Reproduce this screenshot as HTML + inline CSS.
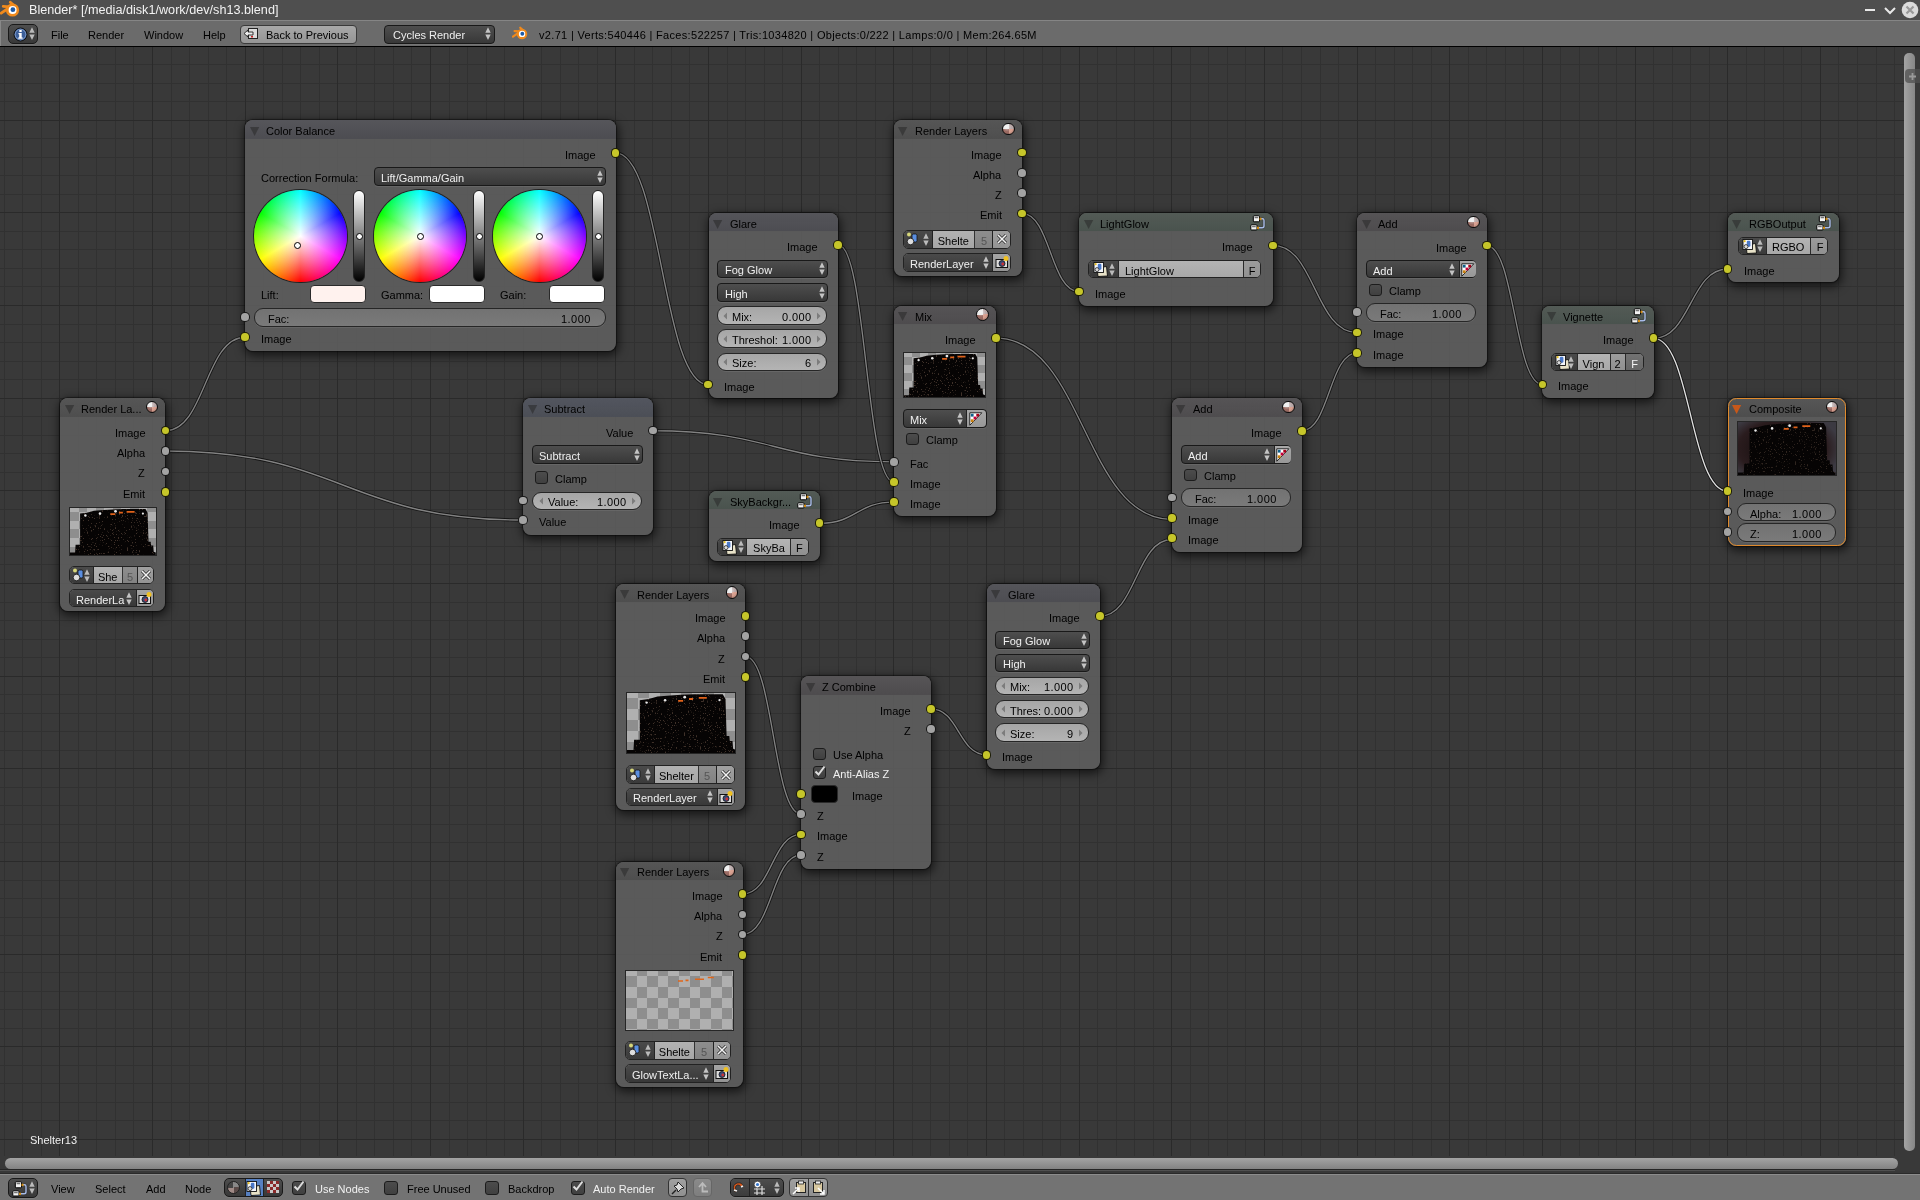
<!DOCTYPE html><html><head><meta charset="utf-8"><style>
html,body{margin:0;padding:0}
body{width:1920px;height:1200px;overflow:hidden;background:#393939;font-family:"Liberation Sans",sans-serif;position:relative}
.a{position:absolute;box-sizing:border-box}
.t{white-space:nowrap;font-family:"Liberation Sans",sans-serif;will-change:transform}
.node{border-radius:8px;background:rgba(95,95,95,0.87);box-shadow:0 0 1px 0.6px rgba(0,0,0,0.45),1px 3px 10px 2px rgba(0,0,0,0.6)}
.node.sel{}
.hdr{border-radius:8px 8px 0 0}
.sock{border-radius:50%;border:1px solid rgba(0,0,0,0.85)}
.dd{border:1px solid #191919;background:linear-gradient(#4e4e4e,#383838);box-shadow:0 1px 0 rgba(255,255,255,0.07)}
.num{border-radius:9px;border:1px solid #262626;background:linear-gradient(#a6a6a6,#b4b4b4);box-shadow:0 1px 0 rgba(255,255,255,0.07)}
.sl{border-radius:9px;border:1px solid #262626;background:linear-gradient(#727272,#7a7a7a);box-shadow:0 1px 0 rgba(255,255,255,0.07)}
.cb{border-radius:3px;border:1px solid #1c1c1c;background:linear-gradient(#4c4c4c,#404040)}
.btn{border-radius:4px;border:1px solid #2a2a2a;background:linear-gradient(#9e9e9e,#8e8e8e)}
</style></head><body><svg class="a" style="left:0;top:0" width="0" height="0"><defs><filter id="nz" x="0" y="0" width="100%" height="100%" color-interpolation-filters="sRGB"><feTurbulence type="fractalNoise" baseFrequency="0.75" numOctaves="2" seed="4" result="t"/><feColorMatrix in="t" type="matrix" values="0 0 0 0 0.32  0 0 0 0 0.25  0 0 0 0 0.21  0 0 0 12 -7.6" result="c"/><feComposite in="c" in2="SourceAlpha" operator="in"/></filter></defs></svg><div class="a " style="left:0.0px;top:0.0px;width:1920.0px;height:20.0px;background:#4f4f4f"></div><svg class="a" style="left:0px;top:0px" width="20.0" height="20.0" viewBox="0 0 20 20"><g stroke="#f08a1c" stroke-linecap="round" stroke-width="2.8" fill="none"><path d="M10.3 2.2 L13.5 5"/><path d="M3.2 6.4 L10 6.8"/><path d="M1.2 13.2 L8 8.5"/></g><circle cx="12.5" cy="10" r="6.6" fill="#f08a1c"/><circle cx="12.6" cy="9.9" r="4" fill="#fff"/><circle cx="12.9" cy="9.7" r="2.4" fill="#1d5aa6"/></svg><div class="a t" style="left:28.5px;top:2.8px;font-size:12.65px;line-height:14px;color:#f2f2f2;">Blender* [/media/disk1/work/dev/sh13.blend]</div><svg class="a" style="left:1860px;top:0" width="60" height="20"><rect x="5" y="9" width="10" height="2" fill="#e8e8e8"/><path d="M25 8 L30 13 L35 8" stroke="#e8e8e8" stroke-width="2" fill="none"/><circle cx="50" cy="10" r="8.3" fill="#dcdcdc"/><path d="M46.5 6.5 L53.5 13.5 M53.5 6.5 L46.5 13.5" stroke="#9a9a9a" stroke-width="2.2"/></svg><div class="a " style="left:0.0px;top:20.0px;width:1920.0px;height:27.0px;background:#6b6b6b;border-top:1px solid #858585;border-bottom:1px solid #000"></div><div class="a " style="left:0.0px;top:21.0px;width:1.0px;height:25.0px;background:#888"></div><div class="a dd" style="left:8.0px;top:24.0px;width:30.0px;height:20.0px;border-radius:5px;"></div><svg class="a" style="left:13px;top:27px" width="15" height="15"><circle cx="7.5" cy="7.5" r="6.5" fill="#3c5f9a" stroke="#111" stroke-width="1"/><circle cx="7.5" cy="7.5" r="5.3" fill="none" stroke="#8aa6d0" stroke-width="0.8"/><rect x="6.3" y="3" width="2.4" height="2" fill="#fff"/><path d="M5.5 6 h3.2 v4.5 h1 v1.3 h-4.5 v-1.3 h1 v-3.2 h-0.7z" fill="#fff"/></svg><svg class="a" style="left:28.5px;top:27.4px" width="6" height="14"><path d="M0.3 5.8 L3 0.2 L5.7 5.8 Z M0.3 7.4 L3 13 L5.7 7.4 Z" fill="#bbb"/></svg><div class="a t" style="left:50.5px;top:28.1px;font-size:11px;line-height:14px;color:#000;">File</div><div class="a t" style="left:88.3px;top:28.1px;font-size:11px;line-height:14px;color:#000;">Render</div><div class="a t" style="left:144.2px;top:28.1px;font-size:11px;line-height:14px;color:#000;">Window</div><div class="a t" style="left:203.3px;top:28.1px;font-size:11px;line-height:14px;color:#000;">Help</div><div class="a " style="left:239.5px;top:24.5px;width:117.5px;height:19.0px;border-radius:4px;border:1px solid #3a3a3a;background:linear-gradient(#a8a8a8,#959595)"></div><svg class="a" style="left:243px;top:27px" width="16" height="14"><rect x="5.5" y="1.5" width="9" height="10" fill="#ddd" stroke="#222"/><path d="M1 6.5 L5 3 V5 H10 V8 H5 V10 Z" fill="#eee" stroke="#222" stroke-width="0.9"/><rect x="8" y="9" width="2" height="1.5" fill="#c22"/></svg><div class="a t" style="left:265.5px;top:27.7px;font-size:11px;line-height:14px;color:#000;">Back to Previous</div><div class="a dd" style="left:384.0px;top:24.5px;width:111.0px;height:19.0px;border-radius:4px;"></div><div class="a t" style="left:392.5px;top:27.9px;font-size:11px;line-height:14px;color:#eee;">Cycles Render</div><svg class="a" style="left:484.5px;top:27.4px" width="6" height="14"><path d="M0.3 5.8 L3 0.2 L5.7 5.8 Z M0.3 7.4 L3 13 L5.7 7.4 Z" fill="#c4c4c4"/></svg><svg class="a" style="left:512px;top:26px" width="16.0" height="16.0" viewBox="0 0 20 20"><g stroke="#f08a1c" stroke-linecap="round" stroke-width="2.8" fill="none"><path d="M10.3 2.2 L13.5 5"/><path d="M3.2 6.4 L10 6.8"/><path d="M1.2 13.2 L8 8.5"/></g><circle cx="12.5" cy="10" r="6.6" fill="#f08a1c"/><circle cx="12.6" cy="9.9" r="4" fill="#fff"/><circle cx="12.9" cy="9.7" r="2.4" fill="#1d5aa6"/></svg><div class="a t" style="left:539.0px;top:28.0px;font-size:11px;line-height:14px;color:#000;letter-spacing:0.32px;">v2.71 | Verts:540446 | Faces:522257 | Tris:1034820 | Objects:0/222 | Lamps:0/0 | Mem:264.65M</div><svg class="a" style="left:0;top:47px" width="1904" height="1109" shape-rendering="crispEdges"><g fill="#313131"><rect x="4" y="0" width="1" height="1109"/><rect x="22" y="0" width="1" height="1109"/><rect x="41" y="0" width="1" height="1109"/><rect x="78" y="0" width="1" height="1109"/><rect x="96" y="0" width="1" height="1109"/><rect x="115" y="0" width="1" height="1109"/><rect x="133" y="0" width="1" height="1109"/><rect x="171" y="0" width="1" height="1109"/><rect x="189" y="0" width="1" height="1109"/><rect x="208" y="0" width="1" height="1109"/><rect x="226" y="0" width="1" height="1109"/><rect x="263" y="0" width="1" height="1109"/><rect x="282" y="0" width="1" height="1109"/><rect x="300" y="0" width="1" height="1109"/><rect x="319" y="0" width="1" height="1109"/><rect x="356" y="0" width="1" height="1109"/><rect x="374" y="0" width="1" height="1109"/><rect x="393" y="0" width="1" height="1109"/><rect x="411" y="0" width="1" height="1109"/><rect x="449" y="0" width="1" height="1109"/><rect x="467" y="0" width="1" height="1109"/><rect x="486" y="0" width="1" height="1109"/><rect x="504" y="0" width="1" height="1109"/><rect x="541" y="0" width="1" height="1109"/><rect x="560" y="0" width="1" height="1109"/><rect x="578" y="0" width="1" height="1109"/><rect x="597" y="0" width="1" height="1109"/><rect x="634" y="0" width="1" height="1109"/><rect x="652" y="0" width="1" height="1109"/><rect x="671" y="0" width="1" height="1109"/><rect x="689" y="0" width="1" height="1109"/><rect x="727" y="0" width="1" height="1109"/><rect x="745" y="0" width="1" height="1109"/><rect x="764" y="0" width="1" height="1109"/><rect x="782" y="0" width="1" height="1109"/><rect x="819" y="0" width="1" height="1109"/><rect x="838" y="0" width="1" height="1109"/><rect x="856" y="0" width="1" height="1109"/><rect x="875" y="0" width="1" height="1109"/><rect x="912" y="0" width="1" height="1109"/><rect x="930" y="0" width="1" height="1109"/><rect x="949" y="0" width="1" height="1109"/><rect x="967" y="0" width="1" height="1109"/><rect x="1004" y="0" width="1" height="1109"/><rect x="1023" y="0" width="1" height="1109"/><rect x="1042" y="0" width="1" height="1109"/><rect x="1060" y="0" width="1" height="1109"/><rect x="1097" y="0" width="1" height="1109"/><rect x="1116" y="0" width="1" height="1109"/><rect x="1134" y="0" width="1" height="1109"/><rect x="1153" y="0" width="1" height="1109"/><rect x="1190" y="0" width="1" height="1109"/><rect x="1208" y="0" width="1" height="1109"/><rect x="1227" y="0" width="1" height="1109"/><rect x="1245" y="0" width="1" height="1109"/><rect x="1282" y="0" width="1" height="1109"/><rect x="1301" y="0" width="1" height="1109"/><rect x="1320" y="0" width="1" height="1109"/><rect x="1338" y="0" width="1" height="1109"/><rect x="1375" y="0" width="1" height="1109"/><rect x="1394" y="0" width="1" height="1109"/><rect x="1412" y="0" width="1" height="1109"/><rect x="1431" y="0" width="1" height="1109"/><rect x="1468" y="0" width="1" height="1109"/><rect x="1486" y="0" width="1" height="1109"/><rect x="1505" y="0" width="1" height="1109"/><rect x="1523" y="0" width="1" height="1109"/><rect x="1560" y="0" width="1" height="1109"/><rect x="1579" y="0" width="1" height="1109"/><rect x="1598" y="0" width="1" height="1109"/><rect x="1616" y="0" width="1" height="1109"/><rect x="1653" y="0" width="1" height="1109"/><rect x="1672" y="0" width="1" height="1109"/><rect x="1690" y="0" width="1" height="1109"/><rect x="1709" y="0" width="1" height="1109"/><rect x="1746" y="0" width="1" height="1109"/><rect x="1764" y="0" width="1" height="1109"/><rect x="1783" y="0" width="1" height="1109"/><rect x="1801" y="0" width="1" height="1109"/><rect x="1838" y="0" width="1" height="1109"/><rect x="1857" y="0" width="1" height="1109"/><rect x="1876" y="0" width="1" height="1109"/><rect x="1894" y="0" width="1" height="1109"/><rect x="0" y="17" width="1904" height="1"/><rect x="0" y="36" width="1904" height="1"/><rect x="0" y="54" width="1904" height="1"/><rect x="0" y="91" width="1904" height="1"/><rect x="0" y="110" width="1904" height="1"/><rect x="0" y="128" width="1904" height="1"/><rect x="0" y="147" width="1904" height="1"/><rect x="0" y="184" width="1904" height="1"/><rect x="0" y="202" width="1904" height="1"/><rect x="0" y="221" width="1904" height="1"/><rect x="0" y="239" width="1904" height="1"/><rect x="0" y="277" width="1904" height="1"/><rect x="0" y="295" width="1904" height="1"/><rect x="0" y="314" width="1904" height="1"/><rect x="0" y="332" width="1904" height="1"/><rect x="0" y="369" width="1904" height="1"/><rect x="0" y="388" width="1904" height="1"/><rect x="0" y="406" width="1904" height="1"/><rect x="0" y="425" width="1904" height="1"/><rect x="0" y="462" width="1904" height="1"/><rect x="0" y="480" width="1904" height="1"/><rect x="0" y="499" width="1904" height="1"/><rect x="0" y="517" width="1904" height="1"/><rect x="0" y="555" width="1904" height="1"/><rect x="0" y="573" width="1904" height="1"/><rect x="0" y="592" width="1904" height="1"/><rect x="0" y="610" width="1904" height="1"/><rect x="0" y="647" width="1904" height="1"/><rect x="0" y="666" width="1904" height="1"/><rect x="0" y="684" width="1904" height="1"/><rect x="0" y="703" width="1904" height="1"/><rect x="0" y="740" width="1904" height="1"/><rect x="0" y="758" width="1904" height="1"/><rect x="0" y="777" width="1904" height="1"/><rect x="0" y="795" width="1904" height="1"/><rect x="0" y="833" width="1904" height="1"/><rect x="0" y="851" width="1904" height="1"/><rect x="0" y="870" width="1904" height="1"/><rect x="0" y="888" width="1904" height="1"/><rect x="0" y="925" width="1904" height="1"/><rect x="0" y="944" width="1904" height="1"/><rect x="0" y="962" width="1904" height="1"/><rect x="0" y="981" width="1904" height="1"/><rect x="0" y="1018" width="1904" height="1"/><rect x="0" y="1036" width="1904" height="1"/><rect x="0" y="1055" width="1904" height="1"/><rect x="0" y="1073" width="1904" height="1"/></g><g fill="#2a2a2a"><rect x="59" y="0" width="1" height="1109"/><rect x="152" y="0" width="1" height="1109"/><rect x="245" y="0" width="1" height="1109"/><rect x="337" y="0" width="1" height="1109"/><rect x="430" y="0" width="1" height="1109"/><rect x="523" y="0" width="1" height="1109"/><rect x="615" y="0" width="1" height="1109"/><rect x="708" y="0" width="1" height="1109"/><rect x="801" y="0" width="1" height="1109"/><rect x="893" y="0" width="1" height="1109"/><rect x="986" y="0" width="1" height="1109"/><rect x="1079" y="0" width="1" height="1109"/><rect x="1171" y="0" width="1" height="1109"/><rect x="1264" y="0" width="1" height="1109"/><rect x="1357" y="0" width="1" height="1109"/><rect x="1449" y="0" width="1" height="1109"/><rect x="1542" y="0" width="1" height="1109"/><rect x="1635" y="0" width="1" height="1109"/><rect x="1727" y="0" width="1" height="1109"/><rect x="1820" y="0" width="1" height="1109"/><rect x="0" y="73" width="1904" height="1"/><rect x="0" y="165" width="1904" height="1"/><rect x="0" y="258" width="1904" height="1"/><rect x="0" y="351" width="1904" height="1"/><rect x="0" y="443" width="1904" height="1"/><rect x="0" y="536" width="1904" height="1"/><rect x="0" y="629" width="1904" height="1"/><rect x="0" y="721" width="1904" height="1"/><rect x="0" y="814" width="1904" height="1"/><rect x="0" y="907" width="1904" height="1"/><rect x="0" y="999" width="1904" height="1"/><rect x="0" y="1092" width="1904" height="1"/></g></svg><svg class="a" style="left:0;top:0" width="1920" height="1200"><path d="M615.3 152.8 C661.8 152.8 661.8 384.7 708.3 384.7" stroke="#111" stroke-opacity="0.9" stroke-width="3.1" fill="none"/><path d="M615.3 152.8 C661.8 152.8 661.8 384.7 708.3 384.7" stroke="#828282" stroke-width="1.35" fill="none"/><path d="M165.4 430.7 C205.2 430.7 205.2 337.2 245.1 337.2" stroke="#111" stroke-opacity="0.9" stroke-width="3.1" fill="none"/><path d="M165.4 430.7 C205.2 430.7 205.2 337.2 245.1 337.2" stroke="#828282" stroke-width="1.35" fill="none"/><path d="M165.4 451.0 C344.2 451.0 344.2 520.0 523.0 520.0" stroke="#111" stroke-opacity="0.9" stroke-width="3.1" fill="none"/><path d="M165.4 451.0 C344.2 451.0 344.2 520.0 523.0 520.0" stroke="#828282" stroke-width="1.35" fill="none"/><path d="M652.7 430.7 C773.2 430.7 773.2 461.8 893.8 461.8" stroke="#111" stroke-opacity="0.9" stroke-width="3.1" fill="none"/><path d="M652.7 430.7 C773.2 430.7 773.2 461.8 893.8 461.8" stroke="#828282" stroke-width="1.35" fill="none"/><path d="M838.3 245.0 C866.0 245.0 866.0 482.0 893.8 482.0" stroke="#111" stroke-opacity="0.9" stroke-width="3.1" fill="none"/><path d="M838.3 245.0 C866.0 245.0 866.0 482.0 893.8 482.0" stroke="#828282" stroke-width="1.35" fill="none"/><path d="M819.6 523.3 C856.7 523.3 856.7 502.1 893.8 502.1" stroke="#111" stroke-opacity="0.9" stroke-width="3.1" fill="none"/><path d="M819.6 523.3 C856.7 523.3 856.7 502.1 893.8 502.1" stroke="#828282" stroke-width="1.35" fill="none"/><path d="M1021.8 213.4 C1050.5 213.4 1050.5 291.7 1079.2 291.7" stroke="#111" stroke-opacity="0.9" stroke-width="3.1" fill="none"/><path d="M1021.8 213.4 C1050.5 213.4 1050.5 291.7 1079.2 291.7" stroke="#828282" stroke-width="1.35" fill="none"/><path d="M1272.8 245.3 C1314.9 245.3 1314.9 332.5 1357.0 332.5" stroke="#111" stroke-opacity="0.9" stroke-width="3.1" fill="none"/><path d="M1272.8 245.3 C1314.9 245.3 1314.9 332.5 1357.0 332.5" stroke="#828282" stroke-width="1.35" fill="none"/><path d="M995.8 338.1 C1083.9 338.1 1083.9 519.5 1172.0 519.5" stroke="#111" stroke-opacity="0.9" stroke-width="3.1" fill="none"/><path d="M995.8 338.1 C1083.9 338.1 1083.9 519.5 1172.0 519.5" stroke="#828282" stroke-width="1.35" fill="none"/><path d="M1100.1 616.0 C1136.0 616.0 1136.0 539.5 1172.0 539.5" stroke="#111" stroke-opacity="0.9" stroke-width="3.1" fill="none"/><path d="M1100.1 616.0 C1136.0 616.0 1136.0 539.5 1172.0 539.5" stroke="#828282" stroke-width="1.35" fill="none"/><path d="M1301.7 430.7 C1329.3 430.7 1329.3 352.8 1357.0 352.8" stroke="#111" stroke-opacity="0.9" stroke-width="3.1" fill="none"/><path d="M1301.7 430.7 C1329.3 430.7 1329.3 352.8 1357.0 352.8" stroke="#828282" stroke-width="1.35" fill="none"/><path d="M1486.7 245.7 C1514.7 245.7 1514.7 384.5 1542.6 384.5" stroke="#111" stroke-opacity="0.9" stroke-width="3.1" fill="none"/><path d="M1486.7 245.7 C1514.7 245.7 1514.7 384.5 1542.6 384.5" stroke="#828282" stroke-width="1.35" fill="none"/><path d="M1653.6 338.3 C1690.5 338.3 1690.5 269.0 1727.4 269.0" stroke="#111" stroke-opacity="0.9" stroke-width="3.1" fill="none"/><path d="M1653.6 338.3 C1690.5 338.3 1690.5 269.0 1727.4 269.0" stroke="#828282" stroke-width="1.35" fill="none"/><path d="M1653.6 338.3 C1690.5 338.3 1690.5 491.0 1727.4 491.0" stroke="#111" stroke-opacity="0.9" stroke-width="3.1" fill="none"/><path d="M1653.6 338.3 C1690.5 338.3 1690.5 491.0 1727.4 491.0" stroke="#e0e0e0" stroke-width="1.35" fill="none"/><path d="M745.5 656.6 C773.3 656.6 773.3 814.1 801.1 814.1" stroke="#111" stroke-opacity="0.9" stroke-width="3.1" fill="none"/><path d="M745.5 656.6 C773.3 656.6 773.3 814.1 801.1 814.1" stroke="#828282" stroke-width="1.35" fill="none"/><path d="M742.6 894.0 C771.9 894.0 771.9 834.4 801.1 834.4" stroke="#111" stroke-opacity="0.9" stroke-width="3.1" fill="none"/><path d="M742.6 894.0 C771.9 894.0 771.9 834.4 801.1 834.4" stroke="#828282" stroke-width="1.35" fill="none"/><path d="M742.6 934.4 C771.9 934.4 771.9 855.0 801.1 855.0" stroke="#111" stroke-opacity="0.9" stroke-width="3.1" fill="none"/><path d="M742.6 934.4 C771.9 934.4 771.9 855.0 801.1 855.0" stroke="#828282" stroke-width="1.35" fill="none"/><path d="M931.0 708.9 C958.7 708.9 958.7 754.8 986.4 754.8" stroke="#111" stroke-opacity="0.9" stroke-width="3.1" fill="none"/><path d="M931.0 708.9 C958.7 708.9 958.7 754.8 986.4 754.8" stroke="#828282" stroke-width="1.35" fill="none"/></svg><div class="a node" style="left:245.2px;top:120.2px;width:370.5px;height:230.6px;"></div><div class="a hdr" style="left:245.2px;top:120.2px;width:370.5px;height:18.6px;background:linear-gradient(rgba(255,255,255,0.035),rgba(0,0,0,0.03)),rgba(80,80,85,0.93);"></div><svg class="a" style="left:249.8px;top:126.9px" width="10" height="10"><path d="M0 0 L9.2 0 L4.6 9Z" fill="rgba(40,40,40,0.55)"/></svg><div class="a t" style="left:266.2px;top:124.2px;font-size:11px;line-height:14px;color:#000;">Color Balance</div><div class="a t" style="right:1324.6px;top:147.7px;font-size:11px;line-height:14px;color:#000;">Image</div><div class="a sock" style="left:610.6px;top:148.0px;width:9.7px;height:9.7px;background:#c6c62a"></div><div class="a t" style="left:261.4px;top:171.4px;font-size:11px;line-height:14px;color:#000;">Correction Formula:</div><div class="a dd" style="left:373.7px;top:167.1px;width:232.3px;height:19.2px;border-radius:4px;"></div><div class="a t" style="left:381.4px;top:171.1px;font-size:11px;line-height:14px;color:#f0f0f0;">Lift/Gamma/Gain</div><svg class="a" style="left:597.1px;top:170.2px" width="6" height="14"><path d="M0.3 5.8 L3 0.2 L5.7 5.8 Z M0.3 7.4 L3 13 L5.7 7.4 Z" fill="#c4c4c4"/></svg><div class="a" style="left:254.0px;top:189.9px;width:92.6px;height:92.6px;border-radius:50%;background:radial-gradient(closest-side,#fff,rgba(255,255,255,0) 100%),conic-gradient(#0ff,#00f,#f0f,#f00,#ff0,#0f0,#0ff);box-shadow:0 0 0 1px #222"></div><div class="a" style="left:293.7px;top:241.9px;width:7px;height:7px;border-radius:50%;border:1.5px solid #000;background:#fff"></div><div class="a" style="left:373.7px;top:189.9px;width:92.6px;height:92.6px;border-radius:50%;background:radial-gradient(closest-side,#fff,rgba(255,255,255,0) 100%),conic-gradient(#0ff,#00f,#f0f,#f00,#ff0,#0f0,#0ff);box-shadow:0 0 0 1px #222"></div><div class="a" style="left:416.5px;top:232.7px;width:7px;height:7px;border-radius:50%;border:1.5px solid #000;background:#fff"></div><div class="a" style="left:493.4px;top:189.9px;width:92.6px;height:92.6px;border-radius:50%;background:radial-gradient(closest-side,#fff,rgba(255,255,255,0) 100%),conic-gradient(#0ff,#00f,#f0f,#f00,#ff0,#0f0,#0ff);box-shadow:0 0 0 1px #222"></div><div class="a" style="left:536.2px;top:232.7px;width:7px;height:7px;border-radius:50%;border:1.5px solid #000;background:#fff"></div><div class="a " style="left:353.2px;top:190.4px;width:12.3px;height:92.0px;border-radius:6.2px;background:linear-gradient(#fff,#000);border:1px solid #222"></div><div class="a" style="left:355.9px;top:232.9px;width:7px;height:7px;border-radius:50%;border:1.5px solid #000;background:#fff"></div><div class="a " style="left:472.8px;top:190.4px;width:12.3px;height:92.0px;border-radius:6.2px;background:linear-gradient(#fff,#000);border:1px solid #222"></div><div class="a" style="left:475.5px;top:232.9px;width:7px;height:7px;border-radius:50%;border:1.5px solid #000;background:#fff"></div><div class="a " style="left:592.3px;top:190.4px;width:12.2px;height:92.0px;border-radius:6.1px;background:linear-gradient(#fff,#000);border:1px solid #222"></div><div class="a" style="left:594.9px;top:232.9px;width:7px;height:7px;border-radius:50%;border:1.5px solid #000;background:#fff"></div><div class="a t" style="left:261.4px;top:288.2px;font-size:11px;line-height:14px;color:#000;">Lift:</div><div class="a t" style="left:380.5px;top:288.2px;font-size:11px;line-height:14px;color:#000;">Gamma:</div><div class="a t" style="left:500.4px;top:288.2px;font-size:11px;line-height:14px;color:#000;">Gain:</div><div class="a " style="left:310.3px;top:285.4px;width:55.3px;height:17.2px;border-radius:4px;background:#fff2ee;border:1px solid #2a2a2a"></div><div class="a " style="left:429.4px;top:285.4px;width:56.0px;height:17.2px;border-radius:4px;background:#fff;border:1px solid #2a2a2a"></div><div class="a " style="left:549.2px;top:285.4px;width:55.4px;height:17.2px;border-radius:4px;background:#fff;border:1px solid #2a2a2a"></div><div class="a sl" style="left:254.3px;top:308.0px;width:351.4px;height:18.7px;"></div><div class="a t" style="left:268.3px;top:312.0px;font-size:11px;line-height:14px;color:#000;">Fac:</div><div class="a t" style="right:1329.6px;top:312.0px;font-size:11px;line-height:14px;color:#000;letter-spacing:0.45px;">1.000</div><div class="a sock" style="left:240.2px;top:312.3px;width:9.7px;height:9.7px;background:#a3a3a3"></div><div class="a sock" style="left:240.2px;top:332.3px;width:9.7px;height:9.7px;background:#c6c62a"></div><div class="a t" style="left:260.7px;top:332.1px;font-size:11px;line-height:14px;color:#000;">Image</div><div class="a node" style="left:59.9px;top:398.2px;width:105.5px;height:213.3px;"></div><div class="a hdr" style="left:59.9px;top:398.2px;width:105.5px;height:18.6px;background:linear-gradient(rgba(255,255,255,0.035),rgba(0,0,0,0.03)),rgba(80,80,80,0.92);"></div><svg class="a" style="left:64.5px;top:404.9px" width="10" height="10"><path d="M0 0 L9.2 0 L4.6 9Z" fill="rgba(40,40,40,0.55)"/></svg><div class="a t" style="left:80.9px;top:402.1px;font-size:11px;line-height:14px;color:#000;">Render La...</div><div class="a" style="left:145.6px;top:400.9px;width:12.6px;height:12.6px;border-radius:50%;border:1px solid #0c0c0c;background:radial-gradient(circle at 35% 30%,rgba(255,255,255,0.6),rgba(255,255,255,0) 45%),radial-gradient(circle at 40% 35%,rgba(0,0,0,0) 55%,rgba(0,0,0,0.35) 100%),conic-gradient(from 0deg at 52% 50%,#b8a8a8 0deg 90deg,#d8a090 90deg 180deg,#9a6a62 180deg 270deg,#e6e6e6 270deg 360deg)"></div><div class="a t" style="right:1774.9px;top:425.6px;font-size:11px;line-height:14px;color:#000;">Image</div><div class="a sock" style="left:160.6px;top:425.8px;width:9.7px;height:9.7px;background:#c6c62a"></div><div class="a t" style="right:1774.9px;top:445.9px;font-size:11px;line-height:14px;color:#000;">Alpha</div><div class="a sock" style="left:160.6px;top:446.1px;width:9.7px;height:9.7px;background:#a3a3a3"></div><div class="a t" style="right:1774.9px;top:466.4px;font-size:11px;line-height:14px;color:#000;">Z</div><div class="a sock" style="left:160.6px;top:466.6px;width:9.7px;height:9.7px;background:#a3a3a3"></div><div class="a t" style="right:1774.9px;top:486.9px;font-size:11px;line-height:14px;color:#000;">Emit</div><div class="a sock" style="left:160.6px;top:487.1px;width:9.7px;height:9.7px;background:#c6c62a"></div><div class="a " style="left:69.0px;top:507.0px;width:87.8px;height:49.0px;background:#8e8e8e;border:1px solid #262626;overflow:hidden"></div><svg class="a" style="left:70.0px;top:508.0px" width="85.8" height="47.0"><g fill="#b0b0b0" shape-rendering="crispEdges"><rect x="8.58" y="-12.87" width="8.58" height="8.58"/><rect x="25.74" y="-12.87" width="8.58" height="8.58"/><rect x="42.90" y="-12.87" width="8.58" height="8.58"/><rect x="60.06" y="-12.87" width="8.58" height="8.58"/><rect x="77.22" y="-12.87" width="8.58" height="8.58"/><rect x="94.38" y="-12.87" width="8.58" height="8.58"/><rect x="0.00" y="-4.29" width="8.58" height="8.58"/><rect x="17.16" y="-4.29" width="8.58" height="8.58"/><rect x="34.32" y="-4.29" width="8.58" height="8.58"/><rect x="51.48" y="-4.29" width="8.58" height="8.58"/><rect x="68.64" y="-4.29" width="8.58" height="8.58"/><rect x="85.80" y="-4.29" width="8.58" height="8.58"/><rect x="8.58" y="4.29" width="8.58" height="8.58"/><rect x="25.74" y="4.29" width="8.58" height="8.58"/><rect x="42.90" y="4.29" width="8.58" height="8.58"/><rect x="60.06" y="4.29" width="8.58" height="8.58"/><rect x="77.22" y="4.29" width="8.58" height="8.58"/><rect x="94.38" y="4.29" width="8.58" height="8.58"/><rect x="0.00" y="12.87" width="8.58" height="8.58"/><rect x="17.16" y="12.87" width="8.58" height="8.58"/><rect x="34.32" y="12.87" width="8.58" height="8.58"/><rect x="51.48" y="12.87" width="8.58" height="8.58"/><rect x="68.64" y="12.87" width="8.58" height="8.58"/><rect x="85.80" y="12.87" width="8.58" height="8.58"/><rect x="8.58" y="21.45" width="8.58" height="8.58"/><rect x="25.74" y="21.45" width="8.58" height="8.58"/><rect x="42.90" y="21.45" width="8.58" height="8.58"/><rect x="60.06" y="21.45" width="8.58" height="8.58"/><rect x="77.22" y="21.45" width="8.58" height="8.58"/><rect x="94.38" y="21.45" width="8.58" height="8.58"/><rect x="0.00" y="30.03" width="8.58" height="8.58"/><rect x="17.16" y="30.03" width="8.58" height="8.58"/><rect x="34.32" y="30.03" width="8.58" height="8.58"/><rect x="51.48" y="30.03" width="8.58" height="8.58"/><rect x="68.64" y="30.03" width="8.58" height="8.58"/><rect x="85.80" y="30.03" width="8.58" height="8.58"/><rect x="8.58" y="38.61" width="8.58" height="8.58"/><rect x="25.74" y="38.61" width="8.58" height="8.58"/><rect x="42.90" y="38.61" width="8.58" height="8.58"/><rect x="60.06" y="38.61" width="8.58" height="8.58"/><rect x="77.22" y="38.61" width="8.58" height="8.58"/><rect x="94.38" y="38.61" width="8.58" height="8.58"/><rect x="0.00" y="47.19" width="8.58" height="8.58"/><rect x="17.16" y="47.19" width="8.58" height="8.58"/><rect x="34.32" y="47.19" width="8.58" height="8.58"/><rect x="51.48" y="47.19" width="8.58" height="8.58"/><rect x="68.64" y="47.19" width="8.58" height="8.58"/><rect x="85.80" y="47.19" width="8.58" height="8.58"/></g><path d="M10.1 5.6 L17.2 4.7 L24.0 2.8 L34.3 1.9 L42.9 1.4 L53.2 0.9 L75.5 0.9 L77.6 4.7 L78.5 33.8 L80.7 33.8 L81.1 37.6 L83.2 37.6 L83.7 43.7 L85.8 44.6 L85.8 47.0 L0.0 47.0 L0.0 44.6 L5.1 44.6 L5.6 36.7 L10.1 36.7Z" fill="#060404"/><path d="M10.1 5.6 L17.2 4.7 L24.0 2.8 L34.3 1.9 L42.9 1.4 L53.2 0.9 L75.5 0.9 L77.6 4.7 L78.5 33.8 L80.7 33.8 L81.1 37.6 L83.2 37.6 L83.7 43.7 L85.8 44.6 L85.8 47.0 L0.0 47.0 L0.0 44.6 L5.1 44.6 L5.6 36.7 L10.1 36.7Z" fill="#000" filter="url(#nz)" opacity="0.75"/><g stroke="#e0621a" stroke-width="1.8"><path d="M40.3 6.1 h5 M48.9 4.7 h4 M56.6 3.8 h8"/></g><g fill="#e8e8e8"><circle cx="15.4" cy="7.5" r="1.2"/><circle cx="30.0" cy="5.6" r="1.3"/><circle cx="45.5" cy="3.3" r="1.4"/><circle cx="72.9" cy="5.6" r="1.1"/></g></svg><div class="a " style="left:69.2px;top:565.8px;width:85.3px;height:18.6px;border-radius:5px;background:#8a8a8a;border:1px solid #222;overflow:hidden"><div class="a " style="left:0.0px;top:0.0px;width:22.9px;height:16.6px;background:linear-gradient(#4a4a4a,#3a3a3a)"></div><div class="a " style="left:22.9px;top:0.0px;width:29.4px;height:16.6px;background:linear-gradient(#b2b2b2,#a6a6a6);border-left:1px solid #222"></div><div class="a " style="left:52.3px;top:0.0px;width:14.7px;height:16.6px;background:linear-gradient(#8e8e8e,#828282);border-left:1px solid #333"></div><div class="a " style="left:67.0px;top:0.0px;width:17.3px;height:16.6px;background:linear-gradient(#a0a0a0,#949494);border-left:1px solid #222"></div></div><svg class="a" style="left:72.2px;top:568.1px" width="14" height="14"><circle cx="3" cy="2.5" r="2" fill="#e6e680" opacity="0.9"/><rect x="6" y="2" width="5" height="8" rx="1.5" fill="#5a8ee0" stroke="#111" stroke-width="0.8"/><circle cx="4.5" cy="9.5" r="3.3" fill="#ddd" stroke="#111" stroke-width="0.8"/></svg><svg class="a" style="left:84.1px;top:568.5px" width="6" height="14"><path d="M0.3 5.8 L3 0.2 L5.7 5.8 Z M0.3 7.4 L3 13 L5.7 7.4 Z" fill="#bbb"/></svg><div class="a t" style="left:93.1px;width:29.400000000000006px;text-align:center;top:569.5px;font-size:11px;line-height:14px;color:#000;">She</div><div class="a t" style="left:109.8px;width:40px;text-align:center;top:569.5px;font-size:11px;line-height:14px;color:#555;">5</div><svg class="a" style="left:139.8px;top:569.1px" width="12" height="12"><path d="M2 2 L10 10 M10 2 L2 10" stroke="#222" stroke-width="3"/><path d="M2 2 L10 10 M10 2 L2 10" stroke="#f4f4f4" stroke-width="1.6"/></svg><div class="a " style="left:69.2px;top:588.8px;width:85.3px;height:18.6px;border-radius:5px;background:#8a8a8a;border:1px solid #222;overflow:hidden"><div class="a " style="left:0.0px;top:0.0px;width:65.5px;height:16.6px;background:linear-gradient(#4a4a4a,#383838)"></div><div class="a " style="left:65.5px;top:0.0px;width:18.8px;height:16.6px;background:linear-gradient(#a4a4a4,#949494);border-left:1px solid #222"></div></div><div class="a t" style="left:76.2px;top:592.5px;font-size:11px;line-height:14px;color:#f0f0f0;">RenderLa</div><svg class="a" style="left:125.7px;top:591.5px" width="6" height="14"><path d="M0.3 5.8 L3 0.2 L5.7 5.8 Z M0.3 7.4 L3 13 L5.7 7.4 Z" fill="#c4c4c4"/></svg><svg class="a" style="left:138.1px;top:591.6px" width="14" height="13"><rect x="1" y="3.5" width="11.5" height="8" fill="#ddd" stroke="#111" stroke-width="1"/><circle cx="7" cy="7.5" r="3" fill="#3a4a7a" stroke="#111" stroke-width="0.8"/><circle cx="7.8" cy="8" r="1.4" fill="#c33"/><circle cx="11" cy="2.5" r="2.5" fill="#f0c020"/></svg><div class="a node" style="left:523.2px;top:398.2px;width:130.1px;height:136.5px;"></div><div class="a hdr" style="left:523.2px;top:398.2px;width:130.1px;height:18.6px;background:linear-gradient(rgba(255,255,255,0.035),rgba(0,0,0,0.03)),rgba(77,80,90,0.92);"></div><svg class="a" style="left:527.8px;top:404.9px" width="10" height="10"><path d="M0 0 L9.2 0 L4.6 9Z" fill="rgba(40,40,40,0.55)"/></svg><div class="a t" style="left:544.2px;top:402.1px;font-size:11px;line-height:14px;color:#000;">Subtract</div><div class="a t" style="right:1287.0px;top:425.6px;font-size:11px;line-height:14px;color:#000;">Value</div><div class="a sock" style="left:647.9px;top:425.8px;width:9.7px;height:9.7px;background:#a3a3a3"></div><div class="a dd" style="left:531.7px;top:444.7px;width:111.5px;height:19.3px;border-radius:4px;"></div><div class="a t" style="left:539.4px;top:448.7px;font-size:11px;line-height:14px;color:#f0f0f0;">Subtract</div><svg class="a" style="left:634.3px;top:447.9px" width="6" height="14"><path d="M0.3 5.8 L3 0.2 L5.7 5.8 Z M0.3 7.4 L3 13 L5.7 7.4 Z" fill="#c4c4c4"/></svg><div class="a cb" style="left:535.3px;top:471.3px;width:12.5px;height:12.5px;"></div><div class="a t" style="left:555.3px;top:471.7px;font-size:11px;line-height:14px;color:#000;">Clamp</div><div class="a num" style="left:532.0px;top:491.6px;width:110.4px;height:18.4px;"></div><svg class="a" style="left:538.5px;top:497.0px" width="5" height="8"><path d="M4 0.5 L0.5 4 L4 7.5Z" fill="#7c7c7c"/></svg><svg class="a" style="left:630.9px;top:497.0px" width="5" height="8"><path d="M1 0.5 L4.5 4 L1 7.5Z" fill="#7c7c7c"/></svg><div class="a t" style="left:547.5px;top:495.4px;font-size:11px;line-height:14px;color:#000;">Value:</div><div class="a t" style="right:1293.6px;top:495.4px;font-size:11px;line-height:14px;color:#000;letter-spacing:0.4px;">1.000</div><div class="a sock" style="left:518.1px;top:495.5px;width:9.7px;height:9.7px;background:#a3a3a3"></div><div class="a sock" style="left:518.1px;top:515.1px;width:9.7px;height:9.7px;background:#a3a3a3"></div><div class="a t" style="left:538.7px;top:514.9px;font-size:11px;line-height:14px;color:#000;">Value</div><div class="a node" style="left:708.5px;top:212.9px;width:129.8px;height:185.4px;"></div><div class="a hdr" style="left:708.5px;top:212.9px;width:129.8px;height:18.6px;background:linear-gradient(rgba(255,255,255,0.035),rgba(0,0,0,0.03)),rgba(80,80,85,0.93);"></div><svg class="a" style="left:713.1px;top:219.6px" width="10" height="10"><path d="M0 0 L9.2 0 L4.6 9Z" fill="rgba(40,40,40,0.55)"/></svg><div class="a t" style="left:729.5px;top:216.8px;font-size:11px;line-height:14px;color:#000;">Glare</div><div class="a t" style="right:1102.0px;top:239.9px;font-size:11px;line-height:14px;color:#000;">Image</div><div class="a sock" style="left:833.4px;top:240.2px;width:9.7px;height:9.7px;background:#c6c62a"></div><div class="a dd" style="left:716.8px;top:259.9px;width:111.2px;height:18.0px;border-radius:4px;"></div><div class="a t" style="left:724.5px;top:263.3px;font-size:11px;line-height:14px;color:#f0f0f0;">Fog Glow</div><svg class="a" style="left:819.1px;top:262.4px" width="6" height="14"><path d="M0.3 5.8 L3 0.2 L5.7 5.8 Z M0.3 7.4 L3 13 L5.7 7.4 Z" fill="#c4c4c4"/></svg><div class="a dd" style="left:716.8px;top:283.1px;width:111.2px;height:18.6px;border-radius:4px;"></div><div class="a t" style="left:724.5px;top:286.8px;font-size:11px;line-height:14px;color:#f0f0f0;">High</div><svg class="a" style="left:819.1px;top:285.9px" width="6" height="14"><path d="M0.3 5.8 L3 0.2 L5.7 5.8 Z M0.3 7.4 L3 13 L5.7 7.4 Z" fill="#c4c4c4"/></svg><div class="a num" style="left:716.8px;top:306.2px;width:110.7px;height:18.4px;"></div><svg class="a" style="left:723.3px;top:311.6px" width="5" height="8"><path d="M4 0.5 L0.5 4 L4 7.5Z" fill="#7c7c7c"/></svg><svg class="a" style="left:816.0px;top:311.6px" width="5" height="8"><path d="M1 0.5 L4.5 4 L1 7.5Z" fill="#7c7c7c"/></svg><div class="a t" style="left:732.3px;top:310.0px;font-size:11px;line-height:14px;color:#000;">Mix:</div><div class="a t" style="right:1108.5px;top:310.0px;font-size:11px;line-height:14px;color:#000;letter-spacing:0.4px;">0.000</div><div class="a num" style="left:716.8px;top:329.2px;width:110.7px;height:18.7px;"></div><svg class="a" style="left:723.3px;top:334.8px" width="5" height="8"><path d="M4 0.5 L0.5 4 L4 7.5Z" fill="#7c7c7c"/></svg><svg class="a" style="left:816.0px;top:334.8px" width="5" height="8"><path d="M1 0.5 L4.5 4 L1 7.5Z" fill="#7c7c7c"/></svg><div class="a t" style="left:732.3px;top:333.1px;font-size:11px;line-height:14px;color:#000;">Threshol:</div><div class="a t" style="right:1108.5px;top:333.1px;font-size:11px;line-height:14px;color:#000;letter-spacing:0.4px;">1.000</div><div class="a num" style="left:716.8px;top:352.5px;width:110.7px;height:18.7px;"></div><svg class="a" style="left:723.3px;top:358.1px" width="5" height="8"><path d="M4 0.5 L0.5 4 L4 7.5Z" fill="#7c7c7c"/></svg><svg class="a" style="left:816.0px;top:358.1px" width="5" height="8"><path d="M1 0.5 L4.5 4 L1 7.5Z" fill="#7c7c7c"/></svg><div class="a t" style="left:732.3px;top:356.4px;font-size:11px;line-height:14px;color:#000;">Size:</div><div class="a t" style="right:1108.5px;top:356.4px;font-size:11px;line-height:14px;color:#000;letter-spacing:0.4px;">6</div><div class="a sock" style="left:703.4px;top:379.8px;width:9.7px;height:9.7px;background:#c6c62a"></div><div class="a t" style="left:724.0px;top:379.6px;font-size:11px;line-height:14px;color:#000;">Image</div><div class="a node" style="left:893.8px;top:120.2px;width:128.1px;height:155.5px;"></div><div class="a hdr" style="left:893.8px;top:120.2px;width:128.1px;height:18.6px;background:linear-gradient(rgba(255,255,255,0.035),rgba(0,0,0,0.03)),rgba(80,80,80,0.92);"></div><svg class="a" style="left:898.4px;top:126.9px" width="10" height="10"><path d="M0 0 L9.2 0 L4.6 9Z" fill="rgba(40,40,40,0.55)"/></svg><div class="a t" style="left:914.8px;top:124.2px;font-size:11px;line-height:14px;color:#000;">Render Layers</div><div class="a" style="left:1002.1px;top:122.9px;width:12.6px;height:12.6px;border-radius:50%;border:1px solid #0c0c0c;background:radial-gradient(circle at 35% 30%,rgba(255,255,255,0.6),rgba(255,255,255,0) 45%),radial-gradient(circle at 40% 35%,rgba(0,0,0,0) 55%,rgba(0,0,0,0.35) 100%),conic-gradient(from 0deg at 52% 50%,#b8a8a8 0deg 90deg,#d8a090 90deg 180deg,#9a6a62 180deg 270deg,#e6e6e6 270deg 360deg)"></div><div class="a t" style="right:918.4px;top:147.6px;font-size:11px;line-height:14px;color:#000;">Image</div><div class="a sock" style="left:1016.9px;top:147.8px;width:9.7px;height:9.7px;background:#c6c62a"></div><div class="a t" style="right:918.4px;top:167.9px;font-size:11px;line-height:14px;color:#000;">Alpha</div><div class="a sock" style="left:1016.9px;top:168.2px;width:9.7px;height:9.7px;background:#a3a3a3"></div><div class="a t" style="right:918.4px;top:188.1px;font-size:11px;line-height:14px;color:#000;">Z</div><div class="a sock" style="left:1016.9px;top:188.3px;width:9.7px;height:9.7px;background:#a3a3a3"></div><div class="a t" style="right:918.4px;top:208.3px;font-size:11px;line-height:14px;color:#000;">Emit</div><div class="a sock" style="left:1016.9px;top:208.6px;width:9.7px;height:9.7px;background:#c6c62a"></div><div class="a " style="left:903.3px;top:230.1px;width:107.9px;height:18.6px;border-radius:5px;background:#8a8a8a;border:1px solid #222;overflow:hidden"><div class="a " style="left:0.0px;top:0.0px;width:27.5px;height:16.6px;background:linear-gradient(#4a4a4a,#3a3a3a)"></div><div class="a " style="left:27.5px;top:0.0px;width:42.7px;height:16.6px;background:linear-gradient(#b2b2b2,#a6a6a6);border-left:1px solid #222"></div><div class="a " style="left:70.2px;top:0.0px;width:18.0px;height:16.6px;background:linear-gradient(#8e8e8e,#828282);border-left:1px solid #333"></div><div class="a " style="left:88.2px;top:0.0px;width:18.7px;height:16.6px;background:linear-gradient(#a0a0a0,#949494);border-left:1px solid #222"></div></div><svg class="a" style="left:906.3px;top:232.4px" width="14" height="14"><circle cx="3" cy="2.5" r="2" fill="#e6e680" opacity="0.9"/><rect x="6" y="2" width="5" height="8" rx="1.5" fill="#5a8ee0" stroke="#111" stroke-width="0.8"/><circle cx="4.5" cy="9.5" r="3.3" fill="#ddd" stroke="#111" stroke-width="0.8"/></svg><svg class="a" style="left:922.8px;top:232.8px" width="6" height="14"><path d="M0.3 5.8 L3 0.2 L5.7 5.8 Z M0.3 7.4 L3 13 L5.7 7.4 Z" fill="#bbb"/></svg><div class="a t" style="left:931.8px;width:42.700000000000045px;text-align:center;top:233.8px;font-size:11px;line-height:14px;color:#000;">Shelte</div><div class="a t" style="left:963.5px;width:40px;text-align:center;top:233.8px;font-size:11px;line-height:14px;color:#555;">5</div><svg class="a" style="left:995.9px;top:233.4px" width="12" height="12"><path d="M2 2 L10 10 M10 2 L2 10" stroke="#222" stroke-width="3"/><path d="M2 2 L10 10 M10 2 L2 10" stroke="#f4f4f4" stroke-width="1.6"/></svg><div class="a " style="left:903.3px;top:253.0px;width:107.9px;height:18.6px;border-radius:5px;background:#8a8a8a;border:1px solid #222;overflow:hidden"><div class="a " style="left:0.0px;top:0.0px;width:88.2px;height:16.6px;background:linear-gradient(#4a4a4a,#383838)"></div><div class="a " style="left:88.2px;top:0.0px;width:18.7px;height:16.6px;background:linear-gradient(#a4a4a4,#949494);border-left:1px solid #222"></div></div><div class="a t" style="left:910.3px;top:256.7px;font-size:11px;line-height:14px;color:#f0f0f0;">RenderLayer</div><svg class="a" style="left:982.5px;top:255.7px" width="6" height="14"><path d="M0.3 5.8 L3 0.2 L5.7 5.8 Z M0.3 7.4 L3 13 L5.7 7.4 Z" fill="#c4c4c4"/></svg><svg class="a" style="left:994.9px;top:255.8px" width="14" height="13"><rect x="1" y="3.5" width="11.5" height="8" fill="#ddd" stroke="#111" stroke-width="1"/><circle cx="7" cy="7.5" r="3" fill="#3a4a7a" stroke="#111" stroke-width="0.8"/><circle cx="7.8" cy="8" r="1.4" fill="#c33"/><circle cx="11" cy="2.5" r="2.5" fill="#f0c020"/></svg><div class="a node" style="left:893.8px;top:305.5px;width:102.2px;height:210.0px;"></div><div class="a hdr" style="left:893.8px;top:305.5px;width:102.2px;height:18.6px;background:linear-gradient(rgba(255,255,255,0.035),rgba(0,0,0,0.03)),rgba(80,78,80,0.92);"></div><svg class="a" style="left:898.4px;top:312.2px" width="10" height="10"><path d="M0 0 L9.2 0 L4.6 9Z" fill="rgba(40,40,40,0.55)"/></svg><div class="a t" style="left:914.8px;top:309.5px;font-size:11px;line-height:14px;color:#000;">Mix</div><div class="a" style="left:976.2px;top:308.2px;width:12.6px;height:12.6px;border-radius:50%;border:1px solid #0c0c0c;background:radial-gradient(circle at 35% 30%,rgba(255,255,255,0.6),rgba(255,255,255,0) 45%),radial-gradient(circle at 40% 35%,rgba(0,0,0,0) 55%,rgba(0,0,0,0.35) 100%),conic-gradient(from 0deg at 52% 50%,#b8a8a8 0deg 90deg,#d8a090 90deg 180deg,#9a6a62 180deg 270deg,#e6e6e6 270deg 360deg)"></div><div class="a t" style="right:944.3px;top:333.0px;font-size:11px;line-height:14px;color:#000;">Image</div><div class="a sock" style="left:990.9px;top:333.2px;width:9.7px;height:9.7px;background:#c6c62a"></div><div class="a " style="left:903.4px;top:352.1px;width:83.0px;height:46.4px;background:#8e8e8e;border:1px solid #262626;overflow:hidden"></div><svg class="a" style="left:904.4px;top:353.1px" width="81.0" height="44.4"><g fill="#b0b0b0" shape-rendering="crispEdges"><rect x="8.10" y="-12.15" width="8.10" height="8.10"/><rect x="24.30" y="-12.15" width="8.10" height="8.10"/><rect x="40.50" y="-12.15" width="8.10" height="8.10"/><rect x="56.70" y="-12.15" width="8.10" height="8.10"/><rect x="72.90" y="-12.15" width="8.10" height="8.10"/><rect x="89.10" y="-12.15" width="8.10" height="8.10"/><rect x="0.00" y="-4.05" width="8.10" height="8.10"/><rect x="16.20" y="-4.05" width="8.10" height="8.10"/><rect x="32.40" y="-4.05" width="8.10" height="8.10"/><rect x="48.60" y="-4.05" width="8.10" height="8.10"/><rect x="64.80" y="-4.05" width="8.10" height="8.10"/><rect x="81.00" y="-4.05" width="8.10" height="8.10"/><rect x="8.10" y="4.05" width="8.10" height="8.10"/><rect x="24.30" y="4.05" width="8.10" height="8.10"/><rect x="40.50" y="4.05" width="8.10" height="8.10"/><rect x="56.70" y="4.05" width="8.10" height="8.10"/><rect x="72.90" y="4.05" width="8.10" height="8.10"/><rect x="89.10" y="4.05" width="8.10" height="8.10"/><rect x="0.00" y="12.15" width="8.10" height="8.10"/><rect x="16.20" y="12.15" width="8.10" height="8.10"/><rect x="32.40" y="12.15" width="8.10" height="8.10"/><rect x="48.60" y="12.15" width="8.10" height="8.10"/><rect x="64.80" y="12.15" width="8.10" height="8.10"/><rect x="81.00" y="12.15" width="8.10" height="8.10"/><rect x="8.10" y="20.25" width="8.10" height="8.10"/><rect x="24.30" y="20.25" width="8.10" height="8.10"/><rect x="40.50" y="20.25" width="8.10" height="8.10"/><rect x="56.70" y="20.25" width="8.10" height="8.10"/><rect x="72.90" y="20.25" width="8.10" height="8.10"/><rect x="89.10" y="20.25" width="8.10" height="8.10"/><rect x="0.00" y="28.35" width="8.10" height="8.10"/><rect x="16.20" y="28.35" width="8.10" height="8.10"/><rect x="32.40" y="28.35" width="8.10" height="8.10"/><rect x="48.60" y="28.35" width="8.10" height="8.10"/><rect x="64.80" y="28.35" width="8.10" height="8.10"/><rect x="81.00" y="28.35" width="8.10" height="8.10"/><rect x="8.10" y="36.45" width="8.10" height="8.10"/><rect x="24.30" y="36.45" width="8.10" height="8.10"/><rect x="40.50" y="36.45" width="8.10" height="8.10"/><rect x="56.70" y="36.45" width="8.10" height="8.10"/><rect x="72.90" y="36.45" width="8.10" height="8.10"/><rect x="89.10" y="36.45" width="8.10" height="8.10"/><rect x="0.00" y="44.55" width="8.10" height="8.10"/><rect x="16.20" y="44.55" width="8.10" height="8.10"/><rect x="32.40" y="44.55" width="8.10" height="8.10"/><rect x="48.60" y="44.55" width="8.10" height="8.10"/><rect x="64.80" y="44.55" width="8.10" height="8.10"/><rect x="81.00" y="44.55" width="8.10" height="8.10"/></g><path d="M9.6 5.3 L16.2 4.4 L22.7 2.7 L32.4 1.8 L40.5 1.3 L50.2 0.9 L71.3 0.9 L73.3 4.4 L74.1 32.0 L76.1 32.0 L76.5 35.5 L78.6 35.5 L79.0 41.3 L81.0 42.2 L81.0 44.4 L0.0 44.4 L0.0 42.2 L4.9 42.2 L5.3 34.6 L9.6 34.6Z" fill="#060404"/><path d="M9.6 5.3 L16.2 4.4 L22.7 2.7 L32.4 1.8 L40.5 1.3 L50.2 0.9 L71.3 0.9 L73.3 4.4 L74.1 32.0 L76.1 32.0 L76.5 35.5 L78.6 35.5 L79.0 41.3 L81.0 42.2 L81.0 44.4 L0.0 44.4 L0.0 42.2 L4.9 42.2 L5.3 34.6 L9.6 34.6Z" fill="#000" filter="url(#nz)" opacity="0.75"/><g stroke="#e0621a" stroke-width="1.8"><path d="M38.1 5.8 h5 M46.2 4.4 h4 M53.5 3.6 h8"/></g><g fill="#e8e8e8"><circle cx="14.6" cy="7.1" r="1.2"/><circle cx="28.3" cy="5.3" r="1.3"/><circle cx="42.9" cy="3.1" r="1.4"/><circle cx="68.8" cy="5.3" r="1.1"/></g></svg><div class="a dd" style="left:902.7px;top:409.1px;width:84.2px;height:18.6px;border-radius:4px;"></div><div class="a t" style="left:910.4px;top:412.8px;font-size:11px;line-height:14px;color:#f0f0f0;">Mix</div><div class="a " style="left:966.3px;top:410.2px;width:19.6px;height:16.6px;background:linear-gradient(#a8a8a8,#989898);border-left:1px solid #222;border-radius:0 4px 4px 0"></div><svg class="a" style="left:956.5px;top:411.9px" width="6" height="14"><path d="M0.3 5.8 L3 0.2 L5.7 5.8 Z M0.3 7.4 L3 13 L5.7 7.4 Z" fill="#c4c4c4"/></svg><svg class="a" style="left:968.5px;top:412.0px" width="14" height="15"><path d="M0.8 0.8 H12.8 L0.8 13.2Z" fill="#fff" stroke="#222" stroke-width="1" stroke-linejoin="round"/><rect x="1.8" y="1.8" width="2.8" height="2.8" fill="#10608a"/><rect x="7.3" y="1.8" width="2.8" height="2.8" fill="#a8001a"/><rect x="4.6" y="4.6" width="2.8" height="2.8" fill="#c8003a"/><rect x="1.8" y="7.3" width="2.8" height="2.8" fill="#c88010"/></svg><div class="a cb" style="left:906.3px;top:432.5px;width:12.5px;height:12.5px;"></div><div class="a t" style="left:926.3px;top:432.9px;font-size:11px;line-height:14px;color:#000;">Clamp</div><div class="a sock" style="left:888.9px;top:456.9px;width:9.7px;height:9.7px;background:#a3a3a3"></div><div class="a t" style="left:909.5px;top:456.7px;font-size:11px;line-height:14px;color:#000;">Fac</div><div class="a sock" style="left:888.9px;top:477.1px;width:9.7px;height:9.7px;background:#c6c62a"></div><div class="a t" style="left:909.5px;top:476.9px;font-size:11px;line-height:14px;color:#000;">Image</div><div class="a sock" style="left:888.9px;top:497.2px;width:9.7px;height:9.7px;background:#c6c62a"></div><div class="a t" style="left:909.5px;top:497.0px;font-size:11px;line-height:14px;color:#000;">Image</div><div class="a node" style="left:708.5px;top:490.8px;width:111.1px;height:70.2px;"></div><div class="a hdr" style="left:708.5px;top:490.8px;width:111.1px;height:18.6px;background:linear-gradient(rgba(255,255,255,0.035),rgba(0,0,0,0.03)),rgba(76,86,80,0.92);"></div><svg class="a" style="left:713.1px;top:497.5px" width="10" height="10"><path d="M0 0 L9.2 0 L4.6 9Z" fill="rgba(40,40,40,0.55)"/></svg><div class="a t" style="left:729.5px;top:494.8px;font-size:11px;line-height:14px;color:#000;">SkyBackgr...</div><svg class="a" style="left:796.6px;top:493.1px" width="16" height="16"><path d="M10 3.8 H12.5 Q14 3.8 14 5.5 V11 Q14 12.8 12 12.8 H8" stroke="#222" stroke-width="2.6" fill="none" opacity="0.5"/><path d="M10 3.8 H12.5 Q14 3.8 14 5.5 V11 Q14 12.8 12 12.8 H8" stroke="#a8bce8" stroke-width="1.4" fill="none"/><rect x="3.3" y="0.8" width="6.2" height="6" rx="0.8" fill="#f2f2f2" stroke="#000" stroke-width="1"/><rect x="0.8" y="9.8" width="6.2" height="5.2" rx="0.8" fill="#f2f2f2" stroke="#000" stroke-width="1"/><rect x="4.6" y="2.2" width="3.6" height="1" fill="#555"/><rect x="2.1" y="11.2" width="3.6" height="1" fill="#555"/><rect x="9.5" y="2.7" width="2" height="2.4" fill="#d08a10"/><rect x="7" y="11.7" width="2" height="2.4" fill="#d08a10"/></svg><div class="a t" style="right:1120.7px;top:518.2px;font-size:11px;line-height:14px;color:#000;">Image</div><div class="a sock" style="left:814.8px;top:518.4px;width:9.7px;height:9.7px;background:#c6c62a"></div><div class="a " style="left:717.4px;top:537.6px;width:91.7px;height:18.4px;border-radius:5px;background:#8a8a8a;border:1px solid #222;overflow:hidden"><div class="a " style="left:0.0px;top:0.0px;width:28.1px;height:16.4px;background:linear-gradient(#4a4a4a,#3a3a3a)"></div><div class="a " style="left:28.1px;top:0.0px;width:43.9px;height:16.4px;background:linear-gradient(#b4b4b4,#a8a8a8);border-left:1px solid #2a2a2a"></div><div class="a " style="left:72.0px;top:0.0px;width:18.7px;height:16.4px;background:linear-gradient(#9c9c9c,#909090);border-left:1px solid #2a2a2a"></div></div><svg class="a" style="left:721.6px;top:539.8px" width="16" height="15"><path d="M4 6 L13.5 4.5 L14.5 14 L5 14.5Z" fill="#e8e2c8" stroke="#111" stroke-width="0.9"/><rect x="1" y="0.5" width="9.5" height="10" fill="#f4f6fa" stroke="#111" stroke-width="0.9"/><circle cx="2.6" cy="2.2" r="1.1" fill="#e8c020"/><rect x="4.8" y="1.8" width="3.6" height="6" rx="1.2" fill="#4a78c8"/><circle cx="4" cy="7.6" r="2" fill="#ddd" stroke="#222" stroke-width="0.8"/></svg><svg class="a" style="left:737.5px;top:540.2px" width="6" height="14"><path d="M0.3 5.8 L3 0.2 L5.7 5.8 Z M0.3 7.4 L3 13 L5.7 7.4 Z" fill="#bbb"/></svg><div class="a t" style="left:746.5px;width:43.89999999999998px;text-align:center;top:541.2px;font-size:11px;line-height:14px;color:#000;">SkyBa</div><div class="a t" style="left:790.4px;width:18.700000000000045px;text-align:center;top:541.2px;font-size:11px;line-height:14px;color:#000;">F</div><div class="a node" style="left:1079.1px;top:212.9px;width:193.7px;height:92.9px;"></div><div class="a hdr" style="left:1079.1px;top:212.9px;width:193.7px;height:18.6px;background:linear-gradient(rgba(255,255,255,0.035),rgba(0,0,0,0.03)),rgba(76,86,80,0.92);"></div><svg class="a" style="left:1083.7px;top:219.6px" width="10" height="10"><path d="M0 0 L9.2 0 L4.6 9Z" fill="rgba(40,40,40,0.55)"/></svg><div class="a t" style="left:1100.1px;top:216.8px;font-size:11px;line-height:14px;color:#000;">LightGlow</div><svg class="a" style="left:1249.8px;top:215.2px" width="16" height="16"><path d="M10 3.8 H12.5 Q14 3.8 14 5.5 V11 Q14 12.8 12 12.8 H8" stroke="#222" stroke-width="2.6" fill="none" opacity="0.5"/><path d="M10 3.8 H12.5 Q14 3.8 14 5.5 V11 Q14 12.8 12 12.8 H8" stroke="#a8bce8" stroke-width="1.4" fill="none"/><rect x="3.3" y="0.8" width="6.2" height="6" rx="0.8" fill="#f2f2f2" stroke="#000" stroke-width="1"/><rect x="0.8" y="9.8" width="6.2" height="5.2" rx="0.8" fill="#f2f2f2" stroke="#000" stroke-width="1"/><rect x="4.6" y="2.2" width="3.6" height="1" fill="#555"/><rect x="2.1" y="11.2" width="3.6" height="1" fill="#555"/><rect x="9.5" y="2.7" width="2" height="2.4" fill="#d08a10"/><rect x="7" y="11.7" width="2" height="2.4" fill="#d08a10"/></svg><div class="a t" style="right:667.5px;top:240.2px;font-size:11px;line-height:14px;color:#000;">Image</div><div class="a sock" style="left:1268.0px;top:240.5px;width:9.7px;height:9.7px;background:#c6c62a"></div><div class="a " style="left:1088.3px;top:259.9px;width:172.8px;height:18.4px;border-radius:5px;background:#8a8a8a;border:1px solid #222;overflow:hidden"><div class="a " style="left:0.0px;top:0.0px;width:28.7px;height:16.4px;background:linear-gradient(#4a4a4a,#3a3a3a)"></div><div class="a " style="left:28.7px;top:0.0px;width:125.0px;height:16.4px;background:linear-gradient(#b4b4b4,#a8a8a8);border-left:1px solid #2a2a2a"></div><div class="a " style="left:153.7px;top:0.0px;width:18.1px;height:16.4px;background:linear-gradient(#9c9c9c,#909090);border-left:1px solid #2a2a2a"></div></div><svg class="a" style="left:1092.5px;top:262.1px" width="16" height="15"><path d="M4 6 L13.5 4.5 L14.5 14 L5 14.5Z" fill="#e8e2c8" stroke="#111" stroke-width="0.9"/><rect x="1" y="0.5" width="9.5" height="10" fill="#f4f6fa" stroke="#111" stroke-width="0.9"/><circle cx="2.6" cy="2.2" r="1.1" fill="#e8c020"/><rect x="4.8" y="1.8" width="3.6" height="6" rx="1.2" fill="#4a78c8"/><circle cx="4" cy="7.6" r="2" fill="#ddd" stroke="#222" stroke-width="0.8"/></svg><svg class="a" style="left:1109.0px;top:262.5px" width="6" height="14"><path d="M0.3 5.8 L3 0.2 L5.7 5.8 Z M0.3 7.4 L3 13 L5.7 7.4 Z" fill="#bbb"/></svg><div class="a t" style="left:1125.0px;top:263.5px;font-size:11px;line-height:14px;color:#000;">LightGlow</div><div class="a t" style="left:1243.0px;width:18.09999999999991px;text-align:center;top:263.5px;font-size:11px;line-height:14px;color:#000;">F</div><div class="a sock" style="left:1074.4px;top:286.8px;width:9.7px;height:9.7px;background:#c6c62a"></div><div class="a t" style="left:1094.9px;top:286.6px;font-size:11px;line-height:14px;color:#000;">Image</div><div class="a node" style="left:1357.1px;top:212.9px;width:130.0px;height:154.1px;"></div><div class="a hdr" style="left:1357.1px;top:212.9px;width:130.0px;height:18.6px;background:linear-gradient(rgba(255,255,255,0.035),rgba(0,0,0,0.03)),rgba(80,78,80,0.92);"></div><svg class="a" style="left:1361.7px;top:219.6px" width="10" height="10"><path d="M0 0 L9.2 0 L4.6 9Z" fill="rgba(40,40,40,0.55)"/></svg><div class="a t" style="left:1378.1px;top:216.8px;font-size:11px;line-height:14px;color:#000;">Add</div><div class="a" style="left:1467.3px;top:215.6px;width:12.6px;height:12.6px;border-radius:50%;border:1px solid #0c0c0c;background:radial-gradient(circle at 35% 30%,rgba(255,255,255,0.6),rgba(255,255,255,0) 45%),radial-gradient(circle at 40% 35%,rgba(0,0,0,0) 55%,rgba(0,0,0,0.35) 100%),conic-gradient(from 0deg at 52% 50%,#b8a8a8 0deg 90deg,#d8a090 90deg 180deg,#9a6a62 180deg 270deg,#e6e6e6 270deg 360deg)"></div><div class="a t" style="right:453.2px;top:240.6px;font-size:11px;line-height:14px;color:#000;">Image</div><div class="a sock" style="left:1481.9px;top:240.8px;width:9.7px;height:9.7px;background:#c6c62a"></div><div class="a dd" style="left:1365.6px;top:260.1px;width:110.9px;height:18.3px;border-radius:4px;"></div><div class="a t" style="left:1373.3px;top:263.6px;font-size:11px;line-height:14px;color:#f0f0f0;">Add</div><div class="a " style="left:1459.0px;top:261.2px;width:16.5px;height:16.3px;background:linear-gradient(#a8a8a8,#989898);border-left:1px solid #222;border-radius:0 4px 4px 0"></div><svg class="a" style="left:1449.0px;top:262.7px" width="6" height="14"><path d="M0.3 5.8 L3 0.2 L5.7 5.8 Z M0.3 7.4 L3 13 L5.7 7.4 Z" fill="#c4c4c4"/></svg><svg class="a" style="left:1461.0px;top:262.5px" width="14" height="15"><path d="M0.8 0.8 H12.8 L0.8 13.2Z" fill="#fff" stroke="#222" stroke-width="1" stroke-linejoin="round"/><rect x="1.8" y="1.8" width="2.8" height="2.8" fill="#10608a"/><rect x="7.3" y="1.8" width="2.8" height="2.8" fill="#a8001a"/><rect x="4.6" y="4.6" width="2.8" height="2.8" fill="#c8003a"/><rect x="1.8" y="7.3" width="2.8" height="2.8" fill="#c88010"/></svg><div class="a cb" style="left:1369.4px;top:283.6px;width:12.5px;height:12.5px;"></div><div class="a t" style="left:1389.4px;top:284.0px;font-size:11px;line-height:14px;color:#000;">Clamp</div><div class="a sl" style="left:1366.3px;top:302.9px;width:110.2px;height:19.3px;"></div><div class="a t" style="left:1380.3px;top:307.2px;font-size:11px;line-height:14px;color:#000;">Fac:</div><div class="a t" style="right:458.5px;top:307.2px;font-size:11px;line-height:14px;color:#000;letter-spacing:0.45px;">1.000</div><div class="a sock" style="left:1352.2px;top:307.4px;width:9.7px;height:9.7px;background:#a3a3a3"></div><div class="a sock" style="left:1352.2px;top:327.6px;width:9.7px;height:9.7px;background:#c6c62a"></div><div class="a t" style="left:1372.7px;top:327.4px;font-size:11px;line-height:14px;color:#000;">Image</div><div class="a sock" style="left:1352.2px;top:347.9px;width:9.7px;height:9.7px;background:#c6c62a"></div><div class="a t" style="left:1372.7px;top:347.7px;font-size:11px;line-height:14px;color:#000;">Image</div><div class="a node" style="left:1171.8px;top:398.2px;width:130.3px;height:154.0px;"></div><div class="a hdr" style="left:1171.8px;top:398.2px;width:130.3px;height:18.6px;background:linear-gradient(rgba(255,255,255,0.035),rgba(0,0,0,0.03)),rgba(80,78,80,0.92);"></div><svg class="a" style="left:1176.4px;top:404.9px" width="10" height="10"><path d="M0 0 L9.2 0 L4.6 9Z" fill="rgba(40,40,40,0.55)"/></svg><div class="a t" style="left:1192.8px;top:402.1px;font-size:11px;line-height:14px;color:#000;">Add</div><div class="a" style="left:1282.3px;top:400.9px;width:12.6px;height:12.6px;border-radius:50%;border:1px solid #0c0c0c;background:radial-gradient(circle at 35% 30%,rgba(255,255,255,0.6),rgba(255,255,255,0) 45%),radial-gradient(circle at 40% 35%,rgba(0,0,0,0) 55%,rgba(0,0,0,0.35) 100%),conic-gradient(from 0deg at 52% 50%,#b8a8a8 0deg 90deg,#d8a090 90deg 180deg,#9a6a62 180deg 270deg,#e6e6e6 270deg 360deg)"></div><div class="a t" style="right:638.2px;top:425.8px;font-size:11px;line-height:14px;color:#000;">Image</div><div class="a sock" style="left:1296.9px;top:426.0px;width:9.7px;height:9.7px;background:#c6c62a"></div><div class="a dd" style="left:1180.6px;top:445.3px;width:110.9px;height:18.3px;border-radius:4px;"></div><div class="a t" style="left:1188.3px;top:448.8px;font-size:11px;line-height:14px;color:#f0f0f0;">Add</div><div class="a " style="left:1274.0px;top:446.4px;width:16.5px;height:16.3px;background:linear-gradient(#a8a8a8,#989898);border-left:1px solid #222;border-radius:0 4px 4px 0"></div><svg class="a" style="left:1264.0px;top:447.9px" width="6" height="14"><path d="M0.3 5.8 L3 0.2 L5.7 5.8 Z M0.3 7.4 L3 13 L5.7 7.4 Z" fill="#c4c4c4"/></svg><svg class="a" style="left:1276.0px;top:447.7px" width="14" height="15"><path d="M0.8 0.8 H12.8 L0.8 13.2Z" fill="#fff" stroke="#222" stroke-width="1" stroke-linejoin="round"/><rect x="1.8" y="1.8" width="2.8" height="2.8" fill="#10608a"/><rect x="7.3" y="1.8" width="2.8" height="2.8" fill="#a8001a"/><rect x="4.6" y="4.6" width="2.8" height="2.8" fill="#c8003a"/><rect x="1.8" y="7.3" width="2.8" height="2.8" fill="#c88010"/></svg><div class="a cb" style="left:1184.4px;top:468.8px;width:12.5px;height:12.5px;"></div><div class="a t" style="left:1204.4px;top:469.2px;font-size:11px;line-height:14px;color:#000;">Clamp</div><div class="a sl" style="left:1181.3px;top:488.1px;width:110.2px;height:19.3px;"></div><div class="a t" style="left:1195.3px;top:492.4px;font-size:11px;line-height:14px;color:#000;">Fac:</div><div class="a t" style="right:643.5px;top:492.4px;font-size:11px;line-height:14px;color:#000;letter-spacing:0.45px;">1.000</div><div class="a sock" style="left:1167.2px;top:492.6px;width:9.7px;height:9.7px;background:#a3a3a3"></div><div class="a sock" style="left:1167.2px;top:512.9px;width:9.7px;height:9.7px;background:#c6c62a"></div><div class="a t" style="left:1187.7px;top:512.6px;font-size:11px;line-height:14px;color:#000;">Image</div><div class="a sock" style="left:1167.2px;top:533.1px;width:9.7px;height:9.7px;background:#c6c62a"></div><div class="a t" style="left:1187.7px;top:532.9px;font-size:11px;line-height:14px;color:#000;">Image</div><div class="a node" style="left:1542.4px;top:305.5px;width:111.2px;height:92.5px;"></div><div class="a hdr" style="left:1542.4px;top:305.5px;width:111.2px;height:18.6px;background:linear-gradient(rgba(255,255,255,0.035),rgba(0,0,0,0.03)),rgba(76,86,80,0.92);"></div><svg class="a" style="left:1547.0px;top:312.2px" width="10" height="10"><path d="M0 0 L9.2 0 L4.6 9Z" fill="rgba(40,40,40,0.55)"/></svg><div class="a t" style="left:1563.4px;top:309.5px;font-size:11px;line-height:14px;color:#000;">Vignette</div><svg class="a" style="left:1630.6px;top:307.8px" width="16" height="16"><path d="M10 3.8 H12.5 Q14 3.8 14 5.5 V11 Q14 12.8 12 12.8 H8" stroke="#222" stroke-width="2.6" fill="none" opacity="0.5"/><path d="M10 3.8 H12.5 Q14 3.8 14 5.5 V11 Q14 12.8 12 12.8 H8" stroke="#a8bce8" stroke-width="1.4" fill="none"/><rect x="3.3" y="0.8" width="6.2" height="6" rx="0.8" fill="#f2f2f2" stroke="#000" stroke-width="1"/><rect x="0.8" y="9.8" width="6.2" height="5.2" rx="0.8" fill="#f2f2f2" stroke="#000" stroke-width="1"/><rect x="4.6" y="2.2" width="3.6" height="1" fill="#555"/><rect x="2.1" y="11.2" width="3.6" height="1" fill="#555"/><rect x="9.5" y="2.7" width="2" height="2.4" fill="#d08a10"/><rect x="7" y="11.7" width="2" height="2.4" fill="#d08a10"/></svg><div class="a t" style="right:286.7px;top:333.2px;font-size:11px;line-height:14px;color:#000;">Image</div><div class="a sock" style="left:1648.8px;top:333.4px;width:9.7px;height:9.7px;background:#c6c62a"></div><div class="a " style="left:1551.0px;top:352.9px;width:92.6px;height:18.4px;border-radius:5px;background:#8a8a8a;border:1px solid #222;overflow:hidden"><div class="a " style="left:0.0px;top:0.0px;width:24.5px;height:16.4px;background:linear-gradient(#4a4a4a,#3a3a3a)"></div><div class="a " style="left:24.5px;top:0.0px;width:33.0px;height:16.4px;background:linear-gradient(#b4b4b4,#a8a8a8);border-left:1px solid #2a2a2a"></div><div class="a " style="left:57.5px;top:0.0px;width:15.0px;height:16.4px;background:linear-gradient(#9c9c9c,#909090);border-left:1px solid #2a2a2a"></div><div class="a " style="left:72.5px;top:0.0px;width:19.1px;height:16.4px;background:linear-gradient(#727272,#666);border-left:1px solid #2a2a2a"></div></div><svg class="a" style="left:1555.2px;top:355.1px" width="16" height="15"><path d="M4 6 L13.5 4.5 L14.5 14 L5 14.5Z" fill="#e8e2c8" stroke="#111" stroke-width="0.9"/><rect x="1" y="0.5" width="9.5" height="10" fill="#f4f6fa" stroke="#111" stroke-width="0.9"/><circle cx="2.6" cy="2.2" r="1.1" fill="#e8c020"/><rect x="4.8" y="1.8" width="3.6" height="6" rx="1.2" fill="#4a78c8"/><circle cx="4" cy="7.6" r="2" fill="#ddd" stroke="#222" stroke-width="0.8"/></svg><svg class="a" style="left:1567.5px;top:355.5px" width="6" height="14"><path d="M0.3 5.8 L3 0.2 L5.7 5.8 Z M0.3 7.4 L3 13 L5.7 7.4 Z" fill="#bbb"/></svg><div class="a t" style="left:1576.5px;width:33.0px;text-align:center;top:356.5px;font-size:11px;line-height:14px;color:#000;">Vign</div><div class="a t" style="left:1609.5px;width:15.0px;text-align:center;top:356.5px;font-size:11px;line-height:14px;color:#000;">2</div><div class="a t" style="left:1624.5px;width:19.09999999999991px;text-align:center;top:356.5px;font-size:11px;line-height:14px;color:#f4f4f4;">F</div><div class="a sock" style="left:1537.8px;top:379.6px;width:9.7px;height:9.7px;background:#c6c62a"></div><div class="a t" style="left:1558.3px;top:379.4px;font-size:11px;line-height:14px;color:#000;">Image</div><div class="a node" style="left:1727.8px;top:212.9px;width:111.2px;height:69.6px;"></div><div class="a hdr" style="left:1727.8px;top:212.9px;width:111.2px;height:18.6px;background:linear-gradient(rgba(255,255,255,0.035),rgba(0,0,0,0.03)),rgba(76,86,80,0.92);"></div><svg class="a" style="left:1732.4px;top:219.6px" width="10" height="10"><path d="M0 0 L9.2 0 L4.6 9Z" fill="rgba(40,40,40,0.55)"/></svg><div class="a t" style="left:1748.8px;top:216.8px;font-size:11px;line-height:14px;color:#000;">RGBOutput</div><svg class="a" style="left:1816.0px;top:215.2px" width="16" height="16"><path d="M10 3.8 H12.5 Q14 3.8 14 5.5 V11 Q14 12.8 12 12.8 H8" stroke="#222" stroke-width="2.6" fill="none" opacity="0.5"/><path d="M10 3.8 H12.5 Q14 3.8 14 5.5 V11 Q14 12.8 12 12.8 H8" stroke="#a8bce8" stroke-width="1.4" fill="none"/><rect x="3.3" y="0.8" width="6.2" height="6" rx="0.8" fill="#f2f2f2" stroke="#000" stroke-width="1"/><rect x="0.8" y="9.8" width="6.2" height="5.2" rx="0.8" fill="#f2f2f2" stroke="#000" stroke-width="1"/><rect x="4.6" y="2.2" width="3.6" height="1" fill="#555"/><rect x="2.1" y="11.2" width="3.6" height="1" fill="#555"/><rect x="9.5" y="2.7" width="2" height="2.4" fill="#d08a10"/><rect x="7" y="11.7" width="2" height="2.4" fill="#d08a10"/></svg><div class="a " style="left:1737.6px;top:236.8px;width:90.9px;height:18.4px;border-radius:5px;background:#8a8a8a;border:1px solid #222;overflow:hidden"><div class="a " style="left:0.0px;top:0.0px;width:27.5px;height:16.4px;background:linear-gradient(#4a4a4a,#3a3a3a)"></div><div class="a " style="left:27.5px;top:0.0px;width:44.4px;height:16.4px;background:linear-gradient(#b4b4b4,#a8a8a8);border-left:1px solid #2a2a2a"></div><div class="a " style="left:71.9px;top:0.0px;width:18.0px;height:16.4px;background:linear-gradient(#9c9c9c,#909090);border-left:1px solid #2a2a2a"></div></div><svg class="a" style="left:1741.8px;top:239.0px" width="16" height="15"><path d="M4 6 L13.5 4.5 L14.5 14 L5 14.5Z" fill="#e8e2c8" stroke="#111" stroke-width="0.9"/><rect x="1" y="0.5" width="9.5" height="10" fill="#f4f6fa" stroke="#111" stroke-width="0.9"/><circle cx="2.6" cy="2.2" r="1.1" fill="#e8c020"/><rect x="4.8" y="1.8" width="3.6" height="6" rx="1.2" fill="#4a78c8"/><circle cx="4" cy="7.6" r="2" fill="#ddd" stroke="#222" stroke-width="0.8"/></svg><svg class="a" style="left:1757.1px;top:239.4px" width="6" height="14"><path d="M0.3 5.8 L3 0.2 L5.7 5.8 Z M0.3 7.4 L3 13 L5.7 7.4 Z" fill="#bbb"/></svg><div class="a t" style="left:1766.1px;width:44.40000000000009px;text-align:center;top:240.4px;font-size:11px;line-height:14px;color:#000;">RGBO</div><div class="a t" style="left:1810.5px;width:18.0px;text-align:center;top:240.4px;font-size:11px;line-height:14px;color:#000;">F</div><div class="a sock" style="left:1722.8px;top:264.1px;width:9.7px;height:9.7px;background:#c6c62a"></div><div class="a t" style="left:1743.7px;top:263.9px;font-size:11px;line-height:14px;color:#000;">Image</div><div class="a node sel" style="left:1727.8px;top:398.2px;width:117.8px;height:147.4px;"></div><div class="a hdr" style="left:1727.8px;top:398.2px;width:117.8px;height:18.6px;background:linear-gradient(rgba(255,255,255,0.035),rgba(0,0,0,0.03)),rgba(80,80,80,0.92);"></div><svg class="a" style="left:1732.4px;top:404.9px" width="10" height="10"><path d="M0 0 L9.2 0 L4.6 9Z" fill="#c8581a"/></svg><div class="a t" style="left:1748.8px;top:402.1px;font-size:11px;line-height:14px;color:#000;">Composite</div><div class="a" style="left:1825.8px;top:400.9px;width:12.6px;height:12.6px;border-radius:50%;border:1px solid #0c0c0c;background:radial-gradient(circle at 35% 30%,rgba(255,255,255,0.6),rgba(255,255,255,0) 45%),radial-gradient(circle at 40% 35%,rgba(0,0,0,0) 55%,rgba(0,0,0,0.35) 100%),conic-gradient(from 0deg at 52% 50%,#b8a8a8 0deg 90deg,#d8a090 90deg 180deg,#9a6a62 180deg 270deg,#e6e6e6 270deg 360deg)"></div><div class="a " style="left:1727.5px;top:397.9px;width:118.4px;height:148.0px;border:1px solid #e08a2c;border-radius:8.5px"></div><div class="a " style="left:1737.2px;top:421.3px;width:99.4px;height:55.1px;background:radial-gradient(ellipse 60% 70% at 45% 50%,#140c0c 20%,#2a1c1e 75%,#3c3a42 100%);border:1px solid #262626;overflow:hidden"></div><svg class="a" style="left:1738.2px;top:422.3px" width="97.4" height="53.1"><path d="M11.5 6.4 L19.5 5.3 L27.3 3.2 L39.0 2.1 L48.7 1.6 L60.4 1.1 L85.7 1.1 L88.1 5.3 L89.1 38.2 L91.6 38.2 L92.0 42.5 L94.5 42.5 L95.0 49.4 L97.4 50.4 L97.4 53.1 L0.0 53.1 L0.0 50.4 L5.8 50.4 L6.3 41.4 L11.5 41.4Z" fill="#060404"/><path d="M11.5 6.4 L19.5 5.3 L27.3 3.2 L39.0 2.1 L48.7 1.6 L60.4 1.1 L85.7 1.1 L88.1 5.3 L89.1 38.2 L91.6 38.2 L92.0 42.5 L94.5 42.5 L95.0 49.4 L97.4 50.4 L97.4 53.1 L0.0 53.1 L0.0 50.4 L5.8 50.4 L6.3 41.4 L11.5 41.4Z" fill="#000" filter="url(#nz)" opacity="0.55"/><g stroke="#e0621a" stroke-width="1.8"><path d="M45.8 6.9 h5 M55.5 5.3 h4 M64.3 4.2 h8"/></g><g fill="#e8e8e8"><circle cx="17.5" cy="8.5" r="1.2"/><circle cx="34.1" cy="6.4" r="1.3"/><circle cx="51.6" cy="3.7" r="1.4"/><circle cx="82.8" cy="6.4" r="1.1"/></g></svg><div class="a sock" style="left:1722.6px;top:486.1px;width:9.7px;height:9.7px;background:#c6c62a"></div><div class="a t" style="left:1743.1px;top:485.9px;font-size:11px;line-height:14px;color:#000;">Image</div><div class="a sl" style="left:1737.0px;top:503.0px;width:99.0px;height:18.3px;"></div><div class="a t" style="left:1750.0px;top:506.8px;font-size:11px;line-height:14px;color:#000;">Alpha:</div><div class="a t" style="right:98.0px;top:506.8px;font-size:11px;line-height:14px;color:#000;letter-spacing:0.45px;">1.000</div><div class="a sock" style="left:1722.6px;top:506.5px;width:9.7px;height:9.7px;background:#a3a3a3"></div><div class="a sl" style="left:1737.0px;top:523.4px;width:99.0px;height:18.3px;"></div><div class="a t" style="left:1750.0px;top:527.2px;font-size:11px;line-height:14px;color:#000;">Z:</div><div class="a t" style="right:98.0px;top:527.2px;font-size:11px;line-height:14px;color:#000;letter-spacing:0.45px;">1.000</div><div class="a sock" style="left:1722.6px;top:526.9px;width:9.7px;height:9.7px;background:#a3a3a3"></div><div class="a node" style="left:615.8px;top:583.5px;width:129.7px;height:226.5px;"></div><div class="a hdr" style="left:615.8px;top:583.5px;width:129.7px;height:18.6px;background:linear-gradient(rgba(255,255,255,0.035),rgba(0,0,0,0.03)),rgba(80,80,80,0.92);"></div><svg class="a" style="left:620.4px;top:590.2px" width="10" height="10"><path d="M0 0 L9.2 0 L4.6 9Z" fill="rgba(40,40,40,0.55)"/></svg><div class="a t" style="left:636.8px;top:587.5px;font-size:11px;line-height:14px;color:#000;">Render Layers</div><div class="a" style="left:725.7px;top:586.2px;width:12.6px;height:12.6px;border-radius:50%;border:1px solid #0c0c0c;background:radial-gradient(circle at 35% 30%,rgba(255,255,255,0.6),rgba(255,255,255,0) 45%),radial-gradient(circle at 40% 35%,rgba(0,0,0,0) 55%,rgba(0,0,0,0.35) 100%),conic-gradient(from 0deg at 52% 50%,#b8a8a8 0deg 90deg,#d8a090 90deg 180deg,#9a6a62 180deg 270deg,#e6e6e6 270deg 360deg)"></div><div class="a t" style="right:1194.8px;top:610.7px;font-size:11px;line-height:14px;color:#000;">Image</div><div class="a sock" style="left:740.6px;top:610.9px;width:9.7px;height:9.7px;background:#c6c62a"></div><div class="a t" style="right:1194.8px;top:631.1px;font-size:11px;line-height:14px;color:#000;">Alpha</div><div class="a sock" style="left:740.6px;top:631.4px;width:9.7px;height:9.7px;background:#a3a3a3"></div><div class="a t" style="right:1194.8px;top:651.5px;font-size:11px;line-height:14px;color:#000;">Z</div><div class="a sock" style="left:740.6px;top:651.8px;width:9.7px;height:9.7px;background:#a3a3a3"></div><div class="a t" style="right:1194.8px;top:671.9px;font-size:11px;line-height:14px;color:#000;">Emit</div><div class="a sock" style="left:740.6px;top:672.1px;width:9.7px;height:9.7px;background:#c6c62a"></div><div class="a " style="left:625.5px;top:692.3px;width:110.8px;height:61.9px;background:#8e8e8e;border:1px solid #262626;overflow:hidden"></div><svg class="a" style="left:626.5px;top:693.3px" width="108.8" height="59.9"><g fill="#b0b0b0" shape-rendering="crispEdges"><rect x="10.88" y="-16.32" width="10.88" height="10.88"/><rect x="32.64" y="-16.32" width="10.88" height="10.88"/><rect x="54.40" y="-16.32" width="10.88" height="10.88"/><rect x="76.16" y="-16.32" width="10.88" height="10.88"/><rect x="97.92" y="-16.32" width="10.88" height="10.88"/><rect x="119.68" y="-16.32" width="10.88" height="10.88"/><rect x="0.00" y="-5.44" width="10.88" height="10.88"/><rect x="21.76" y="-5.44" width="10.88" height="10.88"/><rect x="43.52" y="-5.44" width="10.88" height="10.88"/><rect x="65.28" y="-5.44" width="10.88" height="10.88"/><rect x="87.04" y="-5.44" width="10.88" height="10.88"/><rect x="108.80" y="-5.44" width="10.88" height="10.88"/><rect x="10.88" y="5.44" width="10.88" height="10.88"/><rect x="32.64" y="5.44" width="10.88" height="10.88"/><rect x="54.40" y="5.44" width="10.88" height="10.88"/><rect x="76.16" y="5.44" width="10.88" height="10.88"/><rect x="97.92" y="5.44" width="10.88" height="10.88"/><rect x="119.68" y="5.44" width="10.88" height="10.88"/><rect x="0.00" y="16.32" width="10.88" height="10.88"/><rect x="21.76" y="16.32" width="10.88" height="10.88"/><rect x="43.52" y="16.32" width="10.88" height="10.88"/><rect x="65.28" y="16.32" width="10.88" height="10.88"/><rect x="87.04" y="16.32" width="10.88" height="10.88"/><rect x="108.80" y="16.32" width="10.88" height="10.88"/><rect x="10.88" y="27.20" width="10.88" height="10.88"/><rect x="32.64" y="27.20" width="10.88" height="10.88"/><rect x="54.40" y="27.20" width="10.88" height="10.88"/><rect x="76.16" y="27.20" width="10.88" height="10.88"/><rect x="97.92" y="27.20" width="10.88" height="10.88"/><rect x="119.68" y="27.20" width="10.88" height="10.88"/><rect x="0.00" y="38.08" width="10.88" height="10.88"/><rect x="21.76" y="38.08" width="10.88" height="10.88"/><rect x="43.52" y="38.08" width="10.88" height="10.88"/><rect x="65.28" y="38.08" width="10.88" height="10.88"/><rect x="87.04" y="38.08" width="10.88" height="10.88"/><rect x="108.80" y="38.08" width="10.88" height="10.88"/><rect x="10.88" y="48.96" width="10.88" height="10.88"/><rect x="32.64" y="48.96" width="10.88" height="10.88"/><rect x="54.40" y="48.96" width="10.88" height="10.88"/><rect x="76.16" y="48.96" width="10.88" height="10.88"/><rect x="97.92" y="48.96" width="10.88" height="10.88"/><rect x="119.68" y="48.96" width="10.88" height="10.88"/><rect x="0.00" y="59.84" width="10.88" height="10.88"/><rect x="21.76" y="59.84" width="10.88" height="10.88"/><rect x="43.52" y="59.84" width="10.88" height="10.88"/><rect x="65.28" y="59.84" width="10.88" height="10.88"/><rect x="87.04" y="59.84" width="10.88" height="10.88"/><rect x="108.80" y="59.84" width="10.88" height="10.88"/><rect x="10.88" y="70.72" width="10.88" height="10.88"/><rect x="32.64" y="70.72" width="10.88" height="10.88"/><rect x="54.40" y="70.72" width="10.88" height="10.88"/><rect x="76.16" y="70.72" width="10.88" height="10.88"/><rect x="97.92" y="70.72" width="10.88" height="10.88"/><rect x="119.68" y="70.72" width="10.88" height="10.88"/></g><path d="M12.8 7.2 L21.8 6.0 L30.5 3.6 L43.5 2.4 L54.4 1.8 L67.5 1.2 L95.7 1.2 L98.5 6.0 L99.6 43.1 L102.3 43.1 L102.8 47.9 L105.5 47.9 L106.1 55.7 L108.8 56.9 L108.8 59.9 L0.0 59.9 L0.0 56.9 L6.5 56.9 L7.1 46.7 L12.8 46.7Z" fill="#060404"/><path d="M12.8 7.2 L21.8 6.0 L30.5 3.6 L43.5 2.4 L54.4 1.8 L67.5 1.2 L95.7 1.2 L98.5 6.0 L99.6 43.1 L102.3 43.1 L102.8 47.9 L105.5 47.9 L106.1 55.7 L108.8 56.9 L108.8 59.9 L0.0 59.9 L0.0 56.9 L6.5 56.9 L7.1 46.7 L12.8 46.7Z" fill="#000" filter="url(#nz)" opacity="0.75"/><g stroke="#e0621a" stroke-width="1.8"><path d="M51.1 7.8 h5 M62.0 6.0 h4 M71.8 4.8 h8"/></g><g fill="#e8e8e8"><circle cx="19.6" cy="9.6" r="1.2"/><circle cx="38.1" cy="7.2" r="1.3"/><circle cx="57.7" cy="4.2" r="1.4"/><circle cx="92.5" cy="7.2" r="1.1"/></g></svg><div class="a " style="left:625.5px;top:765.2px;width:109.6px;height:18.6px;border-radius:5px;background:#8a8a8a;border:1px solid #222;overflow:hidden"><div class="a " style="left:0.0px;top:0.0px;width:27.0px;height:16.6px;background:linear-gradient(#4a4a4a,#3a3a3a)"></div><div class="a " style="left:27.0px;top:0.0px;width:44.9px;height:16.6px;background:linear-gradient(#b2b2b2,#a6a6a6);border-left:1px solid #222"></div><div class="a " style="left:71.9px;top:0.0px;width:17.9px;height:16.6px;background:linear-gradient(#8e8e8e,#828282);border-left:1px solid #333"></div><div class="a " style="left:89.8px;top:0.0px;width:18.8px;height:16.6px;background:linear-gradient(#a0a0a0,#949494);border-left:1px solid #222"></div></div><svg class="a" style="left:628.5px;top:767.5px" width="14" height="14"><circle cx="3" cy="2.5" r="2" fill="#e6e680" opacity="0.9"/><rect x="6" y="2" width="5" height="8" rx="1.5" fill="#5a8ee0" stroke="#111" stroke-width="0.8"/><circle cx="4.5" cy="9.5" r="3.3" fill="#ddd" stroke="#111" stroke-width="0.8"/></svg><svg class="a" style="left:644.5px;top:767.9px" width="6" height="14"><path d="M0.3 5.8 L3 0.2 L5.7 5.8 Z M0.3 7.4 L3 13 L5.7 7.4 Z" fill="#bbb"/></svg><div class="a t" style="left:653.5px;width:44.89999999999998px;text-align:center;top:768.9px;font-size:11px;line-height:14px;color:#000;">Shelter</div><div class="a t" style="left:687.3px;width:40px;text-align:center;top:768.9px;font-size:11px;line-height:14px;color:#555;">5</div><svg class="a" style="left:719.7px;top:768.5px" width="12" height="12"><path d="M2 2 L10 10 M10 2 L2 10" stroke="#222" stroke-width="3"/><path d="M2 2 L10 10 M10 2 L2 10" stroke="#f4f4f4" stroke-width="1.6"/></svg><div class="a " style="left:625.5px;top:787.7px;width:109.6px;height:18.6px;border-radius:5px;background:#8a8a8a;border:1px solid #222;overflow:hidden"><div class="a " style="left:0.0px;top:0.0px;width:90.2px;height:16.6px;background:linear-gradient(#4a4a4a,#383838)"></div><div class="a " style="left:90.2px;top:0.0px;width:18.4px;height:16.6px;background:linear-gradient(#a4a4a4,#949494);border-left:1px solid #222"></div></div><div class="a t" style="left:632.5px;top:791.4px;font-size:11px;line-height:14px;color:#f0f0f0;">RenderLayer</div><svg class="a" style="left:706.7px;top:790.4px" width="6" height="14"><path d="M0.3 5.8 L3 0.2 L5.7 5.8 Z M0.3 7.4 L3 13 L5.7 7.4 Z" fill="#c4c4c4"/></svg><svg class="a" style="left:718.9px;top:790.5px" width="14" height="13"><rect x="1" y="3.5" width="11.5" height="8" fill="#ddd" stroke="#111" stroke-width="1"/><circle cx="7" cy="7.5" r="3" fill="#3a4a7a" stroke="#111" stroke-width="0.8"/><circle cx="7.8" cy="8" r="1.4" fill="#c33"/><circle cx="11" cy="2.5" r="2.5" fill="#f0c020"/></svg><div class="a node" style="left:801.1px;top:676.2px;width:129.9px;height:192.8px;"></div><div class="a hdr" style="left:801.1px;top:676.2px;width:129.9px;height:18.6px;background:linear-gradient(rgba(255,255,255,0.035),rgba(0,0,0,0.03)),rgba(80,78,80,0.92);"></div><svg class="a" style="left:805.7px;top:682.9px" width="10" height="10"><path d="M0 0 L9.2 0 L4.6 9Z" fill="rgba(40,40,40,0.55)"/></svg><div class="a t" style="left:822.1px;top:680.1px;font-size:11px;line-height:14px;color:#000;">Z Combine</div><div class="a t" style="right:1009.3px;top:703.8px;font-size:11px;line-height:14px;color:#000;">Image</div><div class="a sock" style="left:926.1px;top:704.0px;width:9.7px;height:9.7px;background:#c6c62a"></div><div class="a t" style="right:1009.3px;top:723.9px;font-size:11px;line-height:14px;color:#000;">Z</div><div class="a sock" style="left:926.1px;top:724.1px;width:9.7px;height:9.7px;background:#a3a3a3"></div><div class="a cb" style="left:813.3px;top:747.8px;width:12.5px;height:12.5px;"></div><div class="a t" style="left:833.3px;top:748.2px;font-size:11px;line-height:14px;color:#000;">Use Alpha</div><div class="a cb" style="left:813.3px;top:766.3px;width:12.5px;height:12.5px;"></div><svg class="a" style="left:813.3px;top:764.3px" width="14" height="14"><path d="M2.5 7.5 L5.5 10.5 L11.5 2.5" stroke="#ddd" stroke-width="2" fill="none"/></svg><div class="a t" style="left:833.3px;top:766.7px;font-size:11px;line-height:14px;color:#f0f0f0;">Anti-Alias Z</div><div class="a " style="left:811.0px;top:785.4px;width:26.5px;height:18.0px;border-radius:4px;background:#000;border:1px solid #2a2a2a"></div><div class="a t" style="left:852.4px;top:788.8px;font-size:11px;line-height:14px;color:#000;">Image</div><div class="a sock" style="left:796.2px;top:788.9px;width:9.7px;height:9.7px;background:#c6c62a"></div><div class="a sock" style="left:796.2px;top:809.2px;width:9.7px;height:9.7px;background:#a3a3a3"></div><div class="a t" style="left:816.8px;top:809.0px;font-size:11px;line-height:14px;color:#000;">Z</div><div class="a sock" style="left:796.2px;top:829.5px;width:9.7px;height:9.7px;background:#c6c62a"></div><div class="a t" style="left:816.8px;top:829.3px;font-size:11px;line-height:14px;color:#000;">Image</div><div class="a sock" style="left:796.2px;top:850.1px;width:9.7px;height:9.7px;background:#a3a3a3"></div><div class="a t" style="left:816.8px;top:849.9px;font-size:11px;line-height:14px;color:#000;">Z</div><div class="a node" style="left:986.5px;top:583.5px;width:113.6px;height:185.3px;"></div><div class="a hdr" style="left:986.5px;top:583.5px;width:113.6px;height:18.6px;background:linear-gradient(rgba(255,255,255,0.035),rgba(0,0,0,0.03)),rgba(80,80,85,0.93);"></div><svg class="a" style="left:991.1px;top:590.2px" width="10" height="10"><path d="M0 0 L9.2 0 L4.6 9Z" fill="rgba(40,40,40,0.55)"/></svg><div class="a t" style="left:1007.5px;top:587.5px;font-size:11px;line-height:14px;color:#000;">Glare</div><div class="a t" style="right:840.2px;top:610.9px;font-size:11px;line-height:14px;color:#000;">Image</div><div class="a sock" style="left:1095.2px;top:611.1px;width:9.7px;height:9.7px;background:#c6c62a"></div><div class="a dd" style="left:994.8px;top:630.7px;width:95.1px;height:18.1px;border-radius:4px;"></div><div class="a t" style="left:1002.5px;top:634.1px;font-size:11px;line-height:14px;color:#f0f0f0;">Fog Glow</div><svg class="a" style="left:1081.0px;top:633.2px" width="6" height="14"><path d="M0.3 5.8 L3 0.2 L5.7 5.8 Z M0.3 7.4 L3 13 L5.7 7.4 Z" fill="#c4c4c4"/></svg><div class="a dd" style="left:994.8px;top:653.8px;width:95.1px;height:18.1px;border-radius:4px;"></div><div class="a t" style="left:1002.5px;top:657.2px;font-size:11px;line-height:14px;color:#f0f0f0;">High</div><svg class="a" style="left:1081.0px;top:656.4px" width="6" height="14"><path d="M0.3 5.8 L3 0.2 L5.7 5.8 Z M0.3 7.4 L3 13 L5.7 7.4 Z" fill="#c4c4c4"/></svg><div class="a num" style="left:994.8px;top:676.6px;width:94.6px;height:18.3px;"></div><svg class="a" style="left:1001.3px;top:682.0px" width="5" height="8"><path d="M4 0.5 L0.5 4 L4 7.5Z" fill="#7c7c7c"/></svg><svg class="a" style="left:1077.9px;top:682.0px" width="5" height="8"><path d="M1 0.5 L4.5 4 L1 7.5Z" fill="#7c7c7c"/></svg><div class="a t" style="left:1010.3px;top:680.3px;font-size:11px;line-height:14px;color:#000;">Mix:</div><div class="a t" style="right:846.6px;top:680.3px;font-size:11px;line-height:14px;color:#000;letter-spacing:0.4px;">1.000</div><div class="a num" style="left:994.8px;top:699.7px;width:94.6px;height:18.7px;"></div><svg class="a" style="left:1001.3px;top:705.2px" width="5" height="8"><path d="M4 0.5 L0.5 4 L4 7.5Z" fill="#7c7c7c"/></svg><svg class="a" style="left:1077.9px;top:705.2px" width="5" height="8"><path d="M1 0.5 L4.5 4 L1 7.5Z" fill="#7c7c7c"/></svg><div class="a t" style="left:1010.3px;top:703.6px;font-size:11px;line-height:14px;color:#000;">Thres:</div><div class="a t" style="right:846.6px;top:703.6px;font-size:11px;line-height:14px;color:#000;letter-spacing:0.4px;">0.000</div><div class="a num" style="left:994.8px;top:722.7px;width:94.6px;height:19.2px;"></div><svg class="a" style="left:1001.3px;top:728.5px" width="5" height="8"><path d="M4 0.5 L0.5 4 L4 7.5Z" fill="#7c7c7c"/></svg><svg class="a" style="left:1077.9px;top:728.5px" width="5" height="8"><path d="M1 0.5 L4.5 4 L1 7.5Z" fill="#7c7c7c"/></svg><div class="a t" style="left:1010.3px;top:726.9px;font-size:11px;line-height:14px;color:#000;">Size:</div><div class="a t" style="right:846.6px;top:726.9px;font-size:11px;line-height:14px;color:#000;letter-spacing:0.4px;">9</div><div class="a sock" style="left:981.5px;top:749.9px;width:9.7px;height:9.7px;background:#c6c62a"></div><div class="a t" style="left:1002.1px;top:749.7px;font-size:11px;line-height:14px;color:#000;">Image</div><div class="a node" style="left:615.8px;top:861.5px;width:126.8px;height:225.1px;"></div><div class="a hdr" style="left:615.8px;top:861.5px;width:126.8px;height:18.6px;background:linear-gradient(rgba(255,255,255,0.035),rgba(0,0,0,0.03)),rgba(80,80,80,0.92);"></div><svg class="a" style="left:620.4px;top:868.2px" width="10" height="10"><path d="M0 0 L9.2 0 L4.6 9Z" fill="rgba(40,40,40,0.55)"/></svg><div class="a t" style="left:636.8px;top:865.4px;font-size:11px;line-height:14px;color:#000;">Render Layers</div><div class="a" style="left:722.8px;top:864.2px;width:12.6px;height:12.6px;border-radius:50%;border:1px solid #0c0c0c;background:radial-gradient(circle at 35% 30%,rgba(255,255,255,0.6),rgba(255,255,255,0) 45%),radial-gradient(circle at 40% 35%,rgba(0,0,0,0) 55%,rgba(0,0,0,0.35) 100%),conic-gradient(from 0deg at 52% 50%,#b8a8a8 0deg 90deg,#d8a090 90deg 180deg,#9a6a62 180deg 270deg,#e6e6e6 270deg 360deg)"></div><div class="a t" style="right:1197.7px;top:888.9px;font-size:11px;line-height:14px;color:#000;">Image</div><div class="a sock" style="left:737.8px;top:889.1px;width:9.7px;height:9.7px;background:#c6c62a"></div><div class="a t" style="right:1197.7px;top:909.3px;font-size:11px;line-height:14px;color:#000;">Alpha</div><div class="a sock" style="left:737.8px;top:909.5px;width:9.7px;height:9.7px;background:#a3a3a3"></div><div class="a t" style="right:1197.7px;top:929.3px;font-size:11px;line-height:14px;color:#000;">Z</div><div class="a sock" style="left:737.8px;top:929.5px;width:9.7px;height:9.7px;background:#a3a3a3"></div><div class="a t" style="right:1197.7px;top:949.9px;font-size:11px;line-height:14px;color:#000;">Emit</div><div class="a sock" style="left:737.8px;top:950.1px;width:9.7px;height:9.7px;background:#c6c62a"></div><div class="a " style="left:625.4px;top:970.4px;width:108.2px;height:61.0px;background:#8e8e8e;border:1px solid #262626;overflow:hidden"></div><svg class="a" style="left:626.4px;top:971.4px" width="106.2" height="59.0"><g fill="#b0b0b0" shape-rendering="crispEdges"><rect x="10.62" y="-15.93" width="10.62" height="10.62"/><rect x="31.86" y="-15.93" width="10.62" height="10.62"/><rect x="53.10" y="-15.93" width="10.62" height="10.62"/><rect x="74.34" y="-15.93" width="10.62" height="10.62"/><rect x="95.58" y="-15.93" width="10.62" height="10.62"/><rect x="116.82" y="-15.93" width="10.62" height="10.62"/><rect x="0.00" y="-5.31" width="10.62" height="10.62"/><rect x="21.24" y="-5.31" width="10.62" height="10.62"/><rect x="42.48" y="-5.31" width="10.62" height="10.62"/><rect x="63.72" y="-5.31" width="10.62" height="10.62"/><rect x="84.96" y="-5.31" width="10.62" height="10.62"/><rect x="106.20" y="-5.31" width="10.62" height="10.62"/><rect x="10.62" y="5.31" width="10.62" height="10.62"/><rect x="31.86" y="5.31" width="10.62" height="10.62"/><rect x="53.10" y="5.31" width="10.62" height="10.62"/><rect x="74.34" y="5.31" width="10.62" height="10.62"/><rect x="95.58" y="5.31" width="10.62" height="10.62"/><rect x="116.82" y="5.31" width="10.62" height="10.62"/><rect x="0.00" y="15.93" width="10.62" height="10.62"/><rect x="21.24" y="15.93" width="10.62" height="10.62"/><rect x="42.48" y="15.93" width="10.62" height="10.62"/><rect x="63.72" y="15.93" width="10.62" height="10.62"/><rect x="84.96" y="15.93" width="10.62" height="10.62"/><rect x="106.20" y="15.93" width="10.62" height="10.62"/><rect x="10.62" y="26.55" width="10.62" height="10.62"/><rect x="31.86" y="26.55" width="10.62" height="10.62"/><rect x="53.10" y="26.55" width="10.62" height="10.62"/><rect x="74.34" y="26.55" width="10.62" height="10.62"/><rect x="95.58" y="26.55" width="10.62" height="10.62"/><rect x="116.82" y="26.55" width="10.62" height="10.62"/><rect x="0.00" y="37.17" width="10.62" height="10.62"/><rect x="21.24" y="37.17" width="10.62" height="10.62"/><rect x="42.48" y="37.17" width="10.62" height="10.62"/><rect x="63.72" y="37.17" width="10.62" height="10.62"/><rect x="84.96" y="37.17" width="10.62" height="10.62"/><rect x="106.20" y="37.17" width="10.62" height="10.62"/><rect x="10.62" y="47.79" width="10.62" height="10.62"/><rect x="31.86" y="47.79" width="10.62" height="10.62"/><rect x="53.10" y="47.79" width="10.62" height="10.62"/><rect x="74.34" y="47.79" width="10.62" height="10.62"/><rect x="95.58" y="47.79" width="10.62" height="10.62"/><rect x="116.82" y="47.79" width="10.62" height="10.62"/><rect x="0.00" y="58.41" width="10.62" height="10.62"/><rect x="21.24" y="58.41" width="10.62" height="10.62"/><rect x="42.48" y="58.41" width="10.62" height="10.62"/><rect x="63.72" y="58.41" width="10.62" height="10.62"/><rect x="84.96" y="58.41" width="10.62" height="10.62"/><rect x="106.20" y="58.41" width="10.62" height="10.62"/><rect x="10.62" y="69.03" width="10.62" height="10.62"/><rect x="31.86" y="69.03" width="10.62" height="10.62"/><rect x="53.10" y="69.03" width="10.62" height="10.62"/><rect x="74.34" y="69.03" width="10.62" height="10.62"/><rect x="95.58" y="69.03" width="10.62" height="10.62"/><rect x="116.82" y="69.03" width="10.62" height="10.62"/></g><path d="M52.0 10.0 h5 M59.5 9.4 h3 M69.0 8.3 h9 M81.8 6.5 h6" stroke="#e0661a" stroke-width="1.6"/></svg><div class="a " style="left:625.4px;top:1041.0px;width:106.0px;height:18.6px;border-radius:5px;background:#8a8a8a;border:1px solid #222;overflow:hidden"><div class="a " style="left:0.0px;top:0.0px;width:27.2px;height:16.6px;background:linear-gradient(#4a4a4a,#3a3a3a)"></div><div class="a " style="left:27.2px;top:0.0px;width:40.8px;height:16.6px;background:linear-gradient(#b2b2b2,#a6a6a6);border-left:1px solid #222"></div><div class="a " style="left:68.0px;top:0.0px;width:19.0px;height:16.6px;background:linear-gradient(#8e8e8e,#828282);border-left:1px solid #333"></div><div class="a " style="left:87.0px;top:0.0px;width:18.0px;height:16.6px;background:linear-gradient(#a0a0a0,#949494);border-left:1px solid #222"></div></div><svg class="a" style="left:628.4px;top:1043.3px" width="14" height="14"><circle cx="3" cy="2.5" r="2" fill="#e6e680" opacity="0.9"/><rect x="6" y="2" width="5" height="8" rx="1.5" fill="#5a8ee0" stroke="#111" stroke-width="0.8"/><circle cx="4.5" cy="9.5" r="3.3" fill="#ddd" stroke="#111" stroke-width="0.8"/></svg><svg class="a" style="left:644.6px;top:1043.7px" width="6" height="14"><path d="M0.3 5.8 L3 0.2 L5.7 5.8 Z M0.3 7.4 L3 13 L5.7 7.4 Z" fill="#bbb"/></svg><div class="a t" style="left:653.6px;width:40.799999999999955px;text-align:center;top:1044.7px;font-size:11px;line-height:14px;color:#000;">Shelte</div><div class="a t" style="left:683.9px;width:40px;text-align:center;top:1044.7px;font-size:11px;line-height:14px;color:#555;">5</div><svg class="a" style="left:716.4px;top:1044.3px" width="12" height="12"><path d="M2 2 L10 10 M10 2 L2 10" stroke="#222" stroke-width="3"/><path d="M2 2 L10 10 M10 2 L2 10" stroke="#f4f4f4" stroke-width="1.6"/></svg><div class="a " style="left:625.4px;top:1064.0px;width:106.0px;height:18.6px;border-radius:5px;background:#8a8a8a;border:1px solid #222;overflow:hidden"><div class="a " style="left:0.0px;top:0.0px;width:87.0px;height:16.6px;background:linear-gradient(#4a4a4a,#383838)"></div><div class="a " style="left:87.0px;top:0.0px;width:18.0px;height:16.6px;background:linear-gradient(#a4a4a4,#949494);border-left:1px solid #222"></div></div><div class="a t" style="left:632.4px;top:1067.7px;font-size:11px;line-height:14px;color:#f0f0f0;">GlowTextLa...</div><svg class="a" style="left:703.4px;top:1066.7px" width="6" height="14"><path d="M0.3 5.8 L3 0.2 L5.7 5.8 Z M0.3 7.4 L3 13 L5.7 7.4 Z" fill="#c4c4c4"/></svg><svg class="a" style="left:715.4px;top:1066.8px" width="14" height="13"><rect x="1" y="3.5" width="11.5" height="8" fill="#ddd" stroke="#111" stroke-width="1"/><circle cx="7" cy="7.5" r="3" fill="#3a4a7a" stroke="#111" stroke-width="0.8"/><circle cx="7.8" cy="8" r="1.4" fill="#c33"/><circle cx="11" cy="2.5" r="2.5" fill="#f0c020"/></svg><div class="a t" style="left:30.0px;top:1133.4px;font-size:11px;line-height:14px;color:#f0f0f0;">Shelter13</div><div class="a " style="left:5.0px;top:1157.6px;width:1892.5px;height:11.6px;border-radius:6px;background:linear-gradient(#a4a4a4,#838383)"></div><div class="a " style="left:1904.0px;top:53.0px;width:11.0px;height:1098.0px;border-radius:5px;background:linear-gradient(90deg,#a4a4a4,#868686)"></div><div class="a " style="left:1905.0px;top:68.5px;width:15.0px;height:14.5px;border-radius:4px 0 0 4px;background:rgba(80,80,80,0.75)"></div><svg class="a" style="left:1908px;top:71.5px" width="9" height="9"><path d="M4.5 1 V8 M1 4.5 H8" stroke="#9a9a9a" stroke-width="1.8"/></svg><div class="a " style="left:0.0px;top:1169.0px;width:1895.0px;height:1.0px;background:#262626"></div><div class="a " style="left:0.0px;top:1170.0px;width:1895.0px;height:1.0px;background:#505050"></div><div class="a " style="left:0.0px;top:1171.0px;width:1920.0px;height:2.0px;background:#383838"></div><div class="a " style="left:0.0px;top:1173.0px;width:1920.0px;height:1.0px;background:#2a2a2a"></div><div class="a " style="left:0.0px;top:1174.0px;width:1920.0px;height:26.0px;background:#737373;border-top:1px solid #8c8c8c"></div><div class="a dd" style="left:8.3px;top:1178.2px;width:29.5px;height:19.5px;border-radius:5px"></div><svg class="a" style="left:11.5px;top:1180.5px" width="16" height="16"><path d="M10 3.8 H12.5 Q14 3.8 14 5.5 V11 Q14 12.8 12 12.8 H8" stroke="#222" stroke-width="2.6" fill="none" opacity="0.5"/><path d="M10 3.8 H12.5 Q14 3.8 14 5.5 V11 Q14 12.8 12 12.8 H8" stroke="#a8bce8" stroke-width="1.4" fill="none"/><rect x="3.3" y="0.8" width="6.2" height="6" rx="0.8" fill="#f2f2f2" stroke="#000" stroke-width="1"/><rect x="0.8" y="9.8" width="6.2" height="5.2" rx="0.8" fill="#f2f2f2" stroke="#000" stroke-width="1"/><rect x="4.6" y="2.2" width="3.6" height="1" fill="#555"/><rect x="2.1" y="11.2" width="3.6" height="1" fill="#555"/><rect x="9.5" y="2.7" width="2" height="2.4" fill="#d08a10"/><rect x="7" y="11.7" width="2" height="2.4" fill="#d08a10"/></svg><svg class="a" style="left:28.5px;top:1181.4px" width="6" height="14"><path d="M0.3 5.8 L3 0.2 L5.7 5.8 Z M0.3 7.4 L3 13 L5.7 7.4 Z" fill="#bbb"/></svg><div class="a t" style="left:50.8px;top:1182.4px;font-size:11px;line-height:14px;color:#000;">View</div><div class="a t" style="left:95.3px;top:1182.4px;font-size:11px;line-height:14px;color:#000;">Select</div><div class="a t" style="left:145.8px;top:1182.4px;font-size:11px;line-height:14px;color:#000;">Add</div><div class="a t" style="left:185.3px;top:1182.4px;font-size:11px;line-height:14px;color:#000;">Node</div><div class="a dd" style="left:224.2px;top:1178.3px;width:59.1px;height:19.2px;border-radius:5px;overflow:hidden"><div class="a " style="left:19.5px;top:0.0px;width:19.6px;height:17.2px;background:#5680c2;border-left:1px solid #222;border-right:1px solid #222"></div></div><div class="a" style="left:227px;top:1181px;width:13px;height:13px;border-radius:50%;border:1px solid #222;background:conic-gradient(#888 0 90deg,#5a4a48 90deg 180deg,#a08a86 180deg 270deg,#444 270deg)"></div><svg class="a" style="left:246.0px;top:1181.0px" width="16" height="15"><path d="M4 6 L13.5 4.5 L14.5 14 L5 14.5Z" fill="#e8e2c8" stroke="#111" stroke-width="0.9"/><rect x="1" y="0.5" width="9.5" height="10" fill="#f4f6fa" stroke="#111" stroke-width="0.9"/><circle cx="2.6" cy="2.2" r="1.1" fill="#e8c020"/><rect x="4.8" y="1.8" width="3.6" height="6" rx="1.2" fill="#4a78c8"/><circle cx="4" cy="7.6" r="2" fill="#ddd" stroke="#222" stroke-width="0.8"/></svg><div class="a" style="left:267px;top:1181px;width:12px;height:12px;background-color:#c9c9c9;background-image:linear-gradient(45deg,#8a2a2a 25%,transparent 25%,transparent 75%,#8a2a2a 75%),linear-gradient(45deg,#8a2a2a 25%,transparent 25%,transparent 75%,#8a2a2a 75%);background-size:6px 6px;background-position:0 0,3px 3px"></div><div class="a cb" style="left:292.0px;top:1180.8px;width:14.0px;height:14.0px;"></div><svg class="a" style="left:292.0px;top:1178.8px" width="14" height="14"><path d="M2.5 7.5 L5.5 10.5 L11.5 2.5" stroke="#ddd" stroke-width="2" fill="none"/></svg><div class="a t" style="left:314.5px;top:1181.9px;font-size:11px;line-height:14px;color:#f2f2f2;">Use Nodes</div><div class="a cb" style="left:384.2px;top:1180.8px;width:14.0px;height:14.0px;"></div><div class="a t" style="left:406.7px;top:1181.9px;font-size:11px;line-height:14px;color:#000;">Free Unused</div><div class="a cb" style="left:485.0px;top:1180.8px;width:14.0px;height:14.0px;"></div><div class="a t" style="left:507.5px;top:1181.9px;font-size:11px;line-height:14px;color:#000;">Backdrop</div><div class="a cb" style="left:571.3px;top:1180.8px;width:14.0px;height:14.0px;"></div><svg class="a" style="left:571.3px;top:1178.8px" width="14" height="14"><path d="M2.5 7.5 L5.5 10.5 L11.5 2.5" stroke="#ddd" stroke-width="2" fill="none"/></svg><div class="a t" style="left:593.0px;top:1181.9px;font-size:11px;line-height:14px;color:#f2f2f2;">Auto Render</div><div class="a " style="left:668.3px;top:1178.3px;width:19.2px;height:19.2px;border-radius:4px;border:1px solid #333;background:linear-gradient(#a0a0a0,#909090)"></div><svg class="a" style="left:670px;top:1180px" width="16" height="16"><path d="M8 2 L14 8 L11 9 L8 12 L7 9 L4 6 L7 5Z" fill="#ddd" stroke="#222" stroke-width="1"/><path d="M6 10 L2 14" stroke="#222" stroke-width="1.5"/></svg><div class="a " style="left:693.3px;top:1178.3px;width:19.2px;height:19.2px;border-radius:4px;border:1px solid #666;background:linear-gradient(#8a8a8a,#7e7e7e)"></div><svg class="a" style="left:695px;top:1180px" width="16" height="16"><path d="M4 7 L7.5 3 L11 7 M7.5 3 V11.5 H13" stroke="#bbb" stroke-width="1.8" fill="none"/></svg><div class="a dd" style="left:729.5px;top:1178.3px;width:54.2px;height:19.2px;border-radius:5px;overflow:hidden"><div class="a " style="left:0.0px;top:0.0px;width:19.0px;height:17.2px;border-right:1px solid #222;background:linear-gradient(#4c4c4c,#3c3c3c)"></div></div><svg class="a" style="left:731px;top:1180px" width="16" height="16"><path d="M4 12 L3 10 Q1 5 6 3 Q11 2 12 6 L10 7 Q9 4.5 6.5 5 Q3.5 6 5 10 L6 11Z" fill="#e05a1a" stroke="#222" stroke-width="0.8"/><path d="M3 10 L6 11" stroke="#eee" stroke-width="1.5"/><path d="M10 7 L12 6" stroke="#eee" stroke-width="1.5"/></svg><svg class="a" style="left:752px;top:1180px" width="18" height="16"><path d="M5 6 V15 M10 6 V15 M2 9 H13 M2 13 H13" stroke="#ddd" stroke-width="1.2"/><circle cx="5.5" cy="4.5" r="3.3" fill="#fff" stroke="#222" stroke-width="0.6"/><circle cx="5.5" cy="4.5" r="1.6" fill="#3a7ad0"/></svg><svg class="a" style="left:774.0px;top:1181.4px" width="6" height="14"><path d="M0.3 5.8 L3 0.2 L5.7 5.8 Z M0.3 7.4 L3 13 L5.7 7.4 Z" fill="#bbb"/></svg><div class="a " style="left:789.2px;top:1178.3px;width:39.1px;height:19.2px;border-radius:4px;border:1px solid #333;background:linear-gradient(#a0a0a0,#909090)"><div class="a " style="left:18.0px;top:0.0px;width:1.0px;height:17.2px;background:#333"></div></div><svg class="a" style="left:791px;top:1180px" width="36" height="16"><rect x="5.5" y="2.5" width="9" height="10" fill="#d8c8a0" stroke="#222"/><rect x="7.5" y="1" width="5" height="3" fill="#eee" stroke="#222" stroke-width="0.8"/><path d="M2 14 L8 8 M4 8 H8 V12" stroke="#fff" stroke-width="1.5" fill="none"/><rect x="22.5" y="2.5" width="9" height="10" fill="#d8c8a0" stroke="#222"/><rect x="24.5" y="1" width="5" height="3" fill="#eee" stroke="#222" stroke-width="0.8"/><path d="M27 8 L33 14 M29 14 H33 V10" stroke="#fff" stroke-width="1.5" fill="none"/></svg></body></html>
